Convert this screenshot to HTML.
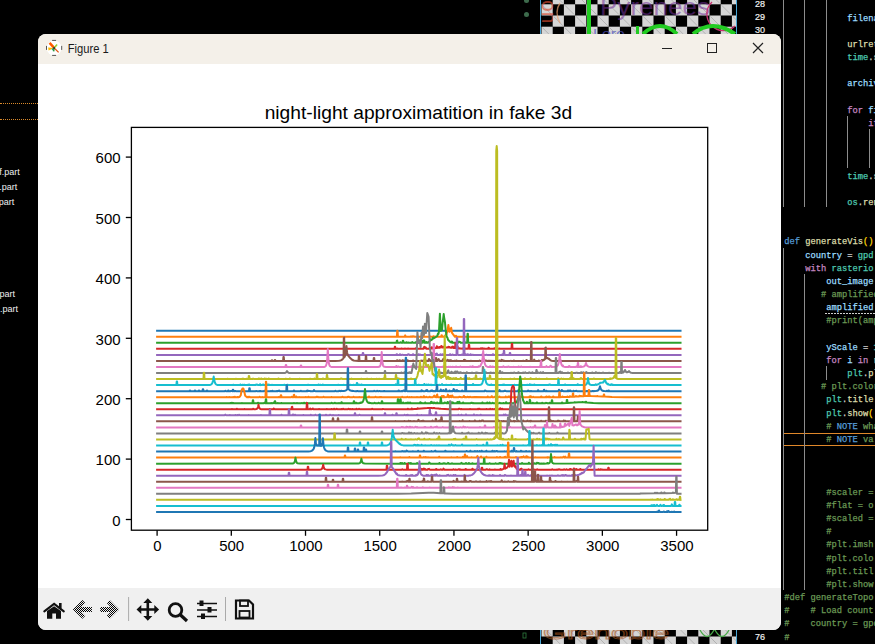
<!DOCTYPE html>
<html><head><meta charset="utf-8">
<style>
html,body{margin:0;padding:0;}
body{width:875px;height:644px;overflow:hidden;position:relative;background:#000;font-family:"Liberation Sans",sans-serif;}
.abs{position:absolute;}
.lt{position:absolute;color:#e8e8e8;font-size:9.5px;line-height:12px;white-space:nowrap;}
.cl{position:absolute;font-family:"Liberation Mono",monospace;font-size:8.75px;line-height:13px;white-space:pre;-webkit-text-stroke:0.25px currentColor;}
.ln{position:absolute;color:#f0f0f0;font-size:9px;line-height:10px;left:753px;width:12px;text-align:right;-webkit-text-stroke:0.2px currentColor;}
#win{position:absolute;left:38px;top:34px;width:743px;height:596px;border-radius:8px;overflow:hidden;background:#fff;}
#tb{position:absolute;left:0;top:0;width:743px;height:30px;background:#f4f0e9;}
#tool{position:absolute;left:0;top:554px;width:743px;height:42px;background:#f0f0f0;}
svg text{font-family:"Liberation Sans",sans-serif;}
#ax text{font-size:14px;fill:#000;}
</style></head><body>
<!-- left panel -->
<div class="abs" style="left:0;top:103px;width:38px;height:0;border-top:1px dotted #d9892a"></div>
<div class="abs" style="left:0;top:119px;width:38px;height:0;border-top:1px dotted #d9892a"></div>
<svg class="abs" style="left:0;top:0" width="60" height="330">
 <g style="font-size:9px;fill:#f0f0f0" text-anchor="end">
 <text x="19.8" y="174.6">f.part</text>
 <text x="17.3" y="189.8">.part</text>
 <text x="14.2" y="204.9">part</text>
 <text x="14.9" y="296.7">part</text>
 <text x="18" y="311.5">.part</text>
 </g></svg>
<!-- green dots -->
<div class="abs" style="left:523.5px;top:-2px;width:5px;height:5px;border-radius:50%;background:#3d6b4c"></div>
<div class="abs" style="left:523.5px;top:11.5px;width:5px;height:5px;border-radius:50%;background:#3d6b4c"></div>
<svg style="position:absolute;left:0;top:0" width="875" height="644"><defs><clipPath id="cc0"><rect x="541" y="0" width="195" height="34"/></clipPath></defs><g clip-path="url(#cc0)">
<rect x="541" y="0" width="195" height="34" fill="#000"/>
<rect x="541.5" y="-18.1" width="11.2" height="11.2" fill="#d6d6d6"/>
<line x1="542.5" y1="-17.1" x2="551.7" y2="-7.9" stroke="#9a9a9a" stroke-width="0.6"/>
<rect x="563.9" y="-18.1" width="11.2" height="11.2" fill="#d6d6d6"/>
<line x1="564.9" y1="-17.1" x2="574.1" y2="-7.9" stroke="#9a9a9a" stroke-width="0.6"/>
<rect x="586.3" y="-18.1" width="11.2" height="11.2" fill="#d6d6d6"/>
<line x1="587.3" y1="-17.1" x2="596.5" y2="-7.9" stroke="#9a9a9a" stroke-width="0.6"/>
<rect x="608.7" y="-18.1" width="11.2" height="11.2" fill="#d6d6d6"/>
<line x1="609.7" y1="-17.1" x2="618.9" y2="-7.9" stroke="#9a9a9a" stroke-width="0.6"/>
<rect x="631.1" y="-18.1" width="11.2" height="11.2" fill="#d6d6d6"/>
<line x1="632.1" y1="-17.1" x2="641.3" y2="-7.9" stroke="#9a9a9a" stroke-width="0.6"/>
<rect x="653.5" y="-18.1" width="11.2" height="11.2" fill="#d6d6d6"/>
<line x1="654.5" y1="-17.1" x2="663.7" y2="-7.9" stroke="#9a9a9a" stroke-width="0.6"/>
<rect x="675.9" y="-18.1" width="11.2" height="11.2" fill="#d6d6d6"/>
<line x1="676.9" y1="-17.1" x2="686.1" y2="-7.9" stroke="#9a9a9a" stroke-width="0.6"/>
<rect x="698.3" y="-18.1" width="11.2" height="11.2" fill="#d6d6d6"/>
<line x1="699.3" y1="-17.1" x2="708.5" y2="-7.9" stroke="#9a9a9a" stroke-width="0.6"/>
<rect x="720.7" y="-18.1" width="11.2" height="11.2" fill="#d6d6d6"/>
<line x1="721.7" y1="-17.1" x2="730.9" y2="-7.9" stroke="#9a9a9a" stroke-width="0.6"/>
<rect x="552.7" y="-6.9" width="11.2" height="11.2" fill="#d6d6d6"/>
<line x1="553.7" y1="-5.9" x2="562.9" y2="3.3" stroke="#9a9a9a" stroke-width="0.6"/>
<rect x="575.1" y="-6.9" width="11.2" height="11.2" fill="#d6d6d6"/>
<line x1="576.1" y1="-5.9" x2="585.3" y2="3.3" stroke="#9a9a9a" stroke-width="0.6"/>
<rect x="597.5" y="-6.9" width="11.2" height="11.2" fill="#d6d6d6"/>
<line x1="598.5" y1="-5.9" x2="607.7" y2="3.3" stroke="#9a9a9a" stroke-width="0.6"/>
<rect x="619.9" y="-6.9" width="11.2" height="11.2" fill="#d6d6d6"/>
<line x1="620.9" y1="-5.9" x2="630.1" y2="3.3" stroke="#9a9a9a" stroke-width="0.6"/>
<rect x="642.3" y="-6.9" width="11.2" height="11.2" fill="#d6d6d6"/>
<line x1="643.3" y1="-5.9" x2="652.5" y2="3.3" stroke="#9a9a9a" stroke-width="0.6"/>
<rect x="664.7" y="-6.9" width="11.2" height="11.2" fill="#d6d6d6"/>
<line x1="665.7" y1="-5.9" x2="674.9" y2="3.3" stroke="#9a9a9a" stroke-width="0.6"/>
<rect x="687.1" y="-6.9" width="11.2" height="11.2" fill="#d6d6d6"/>
<line x1="688.1" y1="-5.9" x2="697.3" y2="3.3" stroke="#9a9a9a" stroke-width="0.6"/>
<rect x="709.5" y="-6.9" width="11.2" height="11.2" fill="#d6d6d6"/>
<line x1="710.5" y1="-5.9" x2="719.7" y2="3.3" stroke="#9a9a9a" stroke-width="0.6"/>
<rect x="731.9" y="-6.9" width="11.2" height="11.2" fill="#d6d6d6"/>
<line x1="732.9" y1="-5.9" x2="742.1" y2="3.3" stroke="#9a9a9a" stroke-width="0.6"/>
<rect x="541.5" y="4.3" width="11.2" height="11.2" fill="#d6d6d6"/>
<line x1="542.5" y1="5.3" x2="551.7" y2="14.5" stroke="#9a9a9a" stroke-width="0.6"/>
<rect x="563.9" y="4.3" width="11.2" height="11.2" fill="#d6d6d6"/>
<line x1="564.9" y1="5.3" x2="574.1" y2="14.5" stroke="#9a9a9a" stroke-width="0.6"/>
<rect x="586.3" y="4.3" width="11.2" height="11.2" fill="#d6d6d6"/>
<line x1="587.3" y1="5.3" x2="596.5" y2="14.5" stroke="#9a9a9a" stroke-width="0.6"/>
<rect x="608.7" y="4.3" width="11.2" height="11.2" fill="#d6d6d6"/>
<line x1="609.7" y1="5.3" x2="618.9" y2="14.5" stroke="#9a9a9a" stroke-width="0.6"/>
<rect x="631.1" y="4.3" width="11.2" height="11.2" fill="#d6d6d6"/>
<line x1="632.1" y1="5.3" x2="641.3" y2="14.5" stroke="#9a9a9a" stroke-width="0.6"/>
<rect x="653.5" y="4.3" width="11.2" height="11.2" fill="#d6d6d6"/>
<line x1="654.5" y1="5.3" x2="663.7" y2="14.5" stroke="#9a9a9a" stroke-width="0.6"/>
<rect x="675.9" y="4.3" width="11.2" height="11.2" fill="#d6d6d6"/>
<line x1="676.9" y1="5.3" x2="686.1" y2="14.5" stroke="#9a9a9a" stroke-width="0.6"/>
<rect x="698.3" y="4.3" width="11.2" height="11.2" fill="#d6d6d6"/>
<line x1="699.3" y1="5.3" x2="708.5" y2="14.5" stroke="#9a9a9a" stroke-width="0.6"/>
<rect x="720.7" y="4.3" width="11.2" height="11.2" fill="#d6d6d6"/>
<line x1="721.7" y1="5.3" x2="730.9" y2="14.5" stroke="#9a9a9a" stroke-width="0.6"/>
<rect x="552.7" y="15.5" width="11.2" height="11.2" fill="#d6d6d6"/>
<line x1="553.7" y1="16.5" x2="562.9" y2="25.7" stroke="#9a9a9a" stroke-width="0.6"/>
<rect x="575.1" y="15.5" width="11.2" height="11.2" fill="#d6d6d6"/>
<line x1="576.1" y1="16.5" x2="585.3" y2="25.7" stroke="#9a9a9a" stroke-width="0.6"/>
<rect x="597.5" y="15.5" width="11.2" height="11.2" fill="#d6d6d6"/>
<line x1="598.5" y1="16.5" x2="607.7" y2="25.7" stroke="#9a9a9a" stroke-width="0.6"/>
<rect x="619.9" y="15.5" width="11.2" height="11.2" fill="#d6d6d6"/>
<line x1="620.9" y1="16.5" x2="630.1" y2="25.7" stroke="#9a9a9a" stroke-width="0.6"/>
<rect x="642.3" y="15.5" width="11.2" height="11.2" fill="#d6d6d6"/>
<line x1="643.3" y1="16.5" x2="652.5" y2="25.7" stroke="#9a9a9a" stroke-width="0.6"/>
<rect x="664.7" y="15.5" width="11.2" height="11.2" fill="#d6d6d6"/>
<line x1="665.7" y1="16.5" x2="674.9" y2="25.7" stroke="#9a9a9a" stroke-width="0.6"/>
<rect x="687.1" y="15.5" width="11.2" height="11.2" fill="#d6d6d6"/>
<line x1="688.1" y1="16.5" x2="697.3" y2="25.7" stroke="#9a9a9a" stroke-width="0.6"/>
<rect x="709.5" y="15.5" width="11.2" height="11.2" fill="#d6d6d6"/>
<line x1="710.5" y1="16.5" x2="719.7" y2="25.7" stroke="#9a9a9a" stroke-width="0.6"/>
<rect x="731.9" y="15.5" width="11.2" height="11.2" fill="#d6d6d6"/>
<line x1="732.9" y1="16.5" x2="742.1" y2="25.7" stroke="#9a9a9a" stroke-width="0.6"/>
<rect x="541.5" y="26.7" width="11.2" height="11.2" fill="#d6d6d6"/>
<line x1="542.5" y1="27.7" x2="551.7" y2="36.9" stroke="#9a9a9a" stroke-width="0.6"/>
<rect x="563.9" y="26.7" width="11.2" height="11.2" fill="#d6d6d6"/>
<line x1="564.9" y1="27.7" x2="574.1" y2="36.9" stroke="#9a9a9a" stroke-width="0.6"/>
<rect x="586.3" y="26.7" width="11.2" height="11.2" fill="#d6d6d6"/>
<line x1="587.3" y1="27.7" x2="596.5" y2="36.9" stroke="#9a9a9a" stroke-width="0.6"/>
<rect x="608.7" y="26.7" width="11.2" height="11.2" fill="#d6d6d6"/>
<line x1="609.7" y1="27.7" x2="618.9" y2="36.9" stroke="#9a9a9a" stroke-width="0.6"/>
<rect x="631.1" y="26.7" width="11.2" height="11.2" fill="#d6d6d6"/>
<line x1="632.1" y1="27.7" x2="641.3" y2="36.9" stroke="#9a9a9a" stroke-width="0.6"/>
<rect x="653.5" y="26.7" width="11.2" height="11.2" fill="#d6d6d6"/>
<line x1="654.5" y1="27.7" x2="663.7" y2="36.9" stroke="#9a9a9a" stroke-width="0.6"/>
<rect x="675.9" y="26.7" width="11.2" height="11.2" fill="#d6d6d6"/>
<line x1="676.9" y1="27.7" x2="686.1" y2="36.9" stroke="#9a9a9a" stroke-width="0.6"/>
<rect x="698.3" y="26.7" width="11.2" height="11.2" fill="#d6d6d6"/>
<line x1="699.3" y1="27.7" x2="708.5" y2="36.9" stroke="#9a9a9a" stroke-width="0.6"/>
<rect x="720.7" y="26.7" width="11.2" height="11.2" fill="#d6d6d6"/>
<line x1="721.7" y1="27.7" x2="730.9" y2="36.9" stroke="#9a9a9a" stroke-width="0.6"/>
<rect x="552.7" y="37.9" width="11.2" height="11.2" fill="#d6d6d6"/>
<line x1="553.7" y1="38.9" x2="562.9" y2="48.1" stroke="#9a9a9a" stroke-width="0.6"/>
<rect x="575.1" y="37.9" width="11.2" height="11.2" fill="#d6d6d6"/>
<line x1="576.1" y1="38.9" x2="585.3" y2="48.1" stroke="#9a9a9a" stroke-width="0.6"/>
<rect x="597.5" y="37.9" width="11.2" height="11.2" fill="#d6d6d6"/>
<line x1="598.5" y1="38.9" x2="607.7" y2="48.1" stroke="#9a9a9a" stroke-width="0.6"/>
<rect x="619.9" y="37.9" width="11.2" height="11.2" fill="#d6d6d6"/>
<line x1="620.9" y1="38.9" x2="630.1" y2="48.1" stroke="#9a9a9a" stroke-width="0.6"/>
<rect x="642.3" y="37.9" width="11.2" height="11.2" fill="#d6d6d6"/>
<line x1="643.3" y1="38.9" x2="652.5" y2="48.1" stroke="#9a9a9a" stroke-width="0.6"/>
<rect x="664.7" y="37.9" width="11.2" height="11.2" fill="#d6d6d6"/>
<line x1="665.7" y1="38.9" x2="674.9" y2="48.1" stroke="#9a9a9a" stroke-width="0.6"/>
<rect x="687.1" y="37.9" width="11.2" height="11.2" fill="#d6d6d6"/>
<line x1="688.1" y1="38.9" x2="697.3" y2="48.1" stroke="#9a9a9a" stroke-width="0.6"/>
<rect x="709.5" y="37.9" width="11.2" height="11.2" fill="#d6d6d6"/>
<line x1="710.5" y1="38.9" x2="719.7" y2="48.1" stroke="#9a9a9a" stroke-width="0.6"/>
<rect x="731.9" y="37.9" width="11.2" height="11.2" fill="#d6d6d6"/>
<line x1="732.9" y1="38.9" x2="742.1" y2="48.1" stroke="#9a9a9a" stroke-width="0.6"/>
</g></svg>
<svg style="position:absolute;left:0;top:0" width="875" height="644"><defs><clipPath id="cc630"><rect x="541" y="630" width="195" height="14"/></clipPath></defs><g clip-path="url(#cc630)">
<rect x="541" y="630" width="195" height="14" fill="#000"/>
<rect x="552.7" y="614.1" width="11.2" height="11.2" fill="#d6d6d6"/>
<line x1="553.7" y1="615.1" x2="562.9" y2="624.3" stroke="#9a9a9a" stroke-width="0.6"/>
<rect x="575.1" y="614.1" width="11.2" height="11.2" fill="#d6d6d6"/>
<line x1="576.1" y1="615.1" x2="585.3" y2="624.3" stroke="#9a9a9a" stroke-width="0.6"/>
<rect x="597.5" y="614.1" width="11.2" height="11.2" fill="#d6d6d6"/>
<line x1="598.5" y1="615.1" x2="607.7" y2="624.3" stroke="#9a9a9a" stroke-width="0.6"/>
<rect x="619.9" y="614.1" width="11.2" height="11.2" fill="#d6d6d6"/>
<line x1="620.9" y1="615.1" x2="630.1" y2="624.3" stroke="#9a9a9a" stroke-width="0.6"/>
<rect x="642.3" y="614.1" width="11.2" height="11.2" fill="#d6d6d6"/>
<line x1="643.3" y1="615.1" x2="652.5" y2="624.3" stroke="#9a9a9a" stroke-width="0.6"/>
<rect x="664.7" y="614.1" width="11.2" height="11.2" fill="#d6d6d6"/>
<line x1="665.7" y1="615.1" x2="674.9" y2="624.3" stroke="#9a9a9a" stroke-width="0.6"/>
<rect x="687.1" y="614.1" width="11.2" height="11.2" fill="#d6d6d6"/>
<line x1="688.1" y1="615.1" x2="697.3" y2="624.3" stroke="#9a9a9a" stroke-width="0.6"/>
<rect x="709.5" y="614.1" width="11.2" height="11.2" fill="#d6d6d6"/>
<line x1="710.5" y1="615.1" x2="719.7" y2="624.3" stroke="#9a9a9a" stroke-width="0.6"/>
<rect x="731.9" y="614.1" width="11.2" height="11.2" fill="#d6d6d6"/>
<line x1="732.9" y1="615.1" x2="742.1" y2="624.3" stroke="#9a9a9a" stroke-width="0.6"/>
<rect x="541.5" y="625.3" width="11.2" height="11.2" fill="#d6d6d6"/>
<line x1="542.5" y1="626.3" x2="551.7" y2="635.5" stroke="#9a9a9a" stroke-width="0.6"/>
<rect x="563.9" y="625.3" width="11.2" height="11.2" fill="#d6d6d6"/>
<line x1="564.9" y1="626.3" x2="574.1" y2="635.5" stroke="#9a9a9a" stroke-width="0.6"/>
<rect x="586.3" y="625.3" width="11.2" height="11.2" fill="#d6d6d6"/>
<line x1="587.3" y1="626.3" x2="596.5" y2="635.5" stroke="#9a9a9a" stroke-width="0.6"/>
<rect x="608.7" y="625.3" width="11.2" height="11.2" fill="#d6d6d6"/>
<line x1="609.7" y1="626.3" x2="618.9" y2="635.5" stroke="#9a9a9a" stroke-width="0.6"/>
<rect x="631.1" y="625.3" width="11.2" height="11.2" fill="#d6d6d6"/>
<line x1="632.1" y1="626.3" x2="641.3" y2="635.5" stroke="#9a9a9a" stroke-width="0.6"/>
<rect x="653.5" y="625.3" width="11.2" height="11.2" fill="#d6d6d6"/>
<line x1="654.5" y1="626.3" x2="663.7" y2="635.5" stroke="#9a9a9a" stroke-width="0.6"/>
<rect x="675.9" y="625.3" width="11.2" height="11.2" fill="#d6d6d6"/>
<line x1="676.9" y1="626.3" x2="686.1" y2="635.5" stroke="#9a9a9a" stroke-width="0.6"/>
<rect x="698.3" y="625.3" width="11.2" height="11.2" fill="#d6d6d6"/>
<line x1="699.3" y1="626.3" x2="708.5" y2="635.5" stroke="#9a9a9a" stroke-width="0.6"/>
<rect x="720.7" y="625.3" width="11.2" height="11.2" fill="#d6d6d6"/>
<line x1="721.7" y1="626.3" x2="730.9" y2="635.5" stroke="#9a9a9a" stroke-width="0.6"/>
<rect x="552.7" y="636.5" width="11.2" height="11.2" fill="#d6d6d6"/>
<line x1="553.7" y1="637.5" x2="562.9" y2="646.7" stroke="#9a9a9a" stroke-width="0.6"/>
<rect x="575.1" y="636.5" width="11.2" height="11.2" fill="#d6d6d6"/>
<line x1="576.1" y1="637.5" x2="585.3" y2="646.7" stroke="#9a9a9a" stroke-width="0.6"/>
<rect x="597.5" y="636.5" width="11.2" height="11.2" fill="#d6d6d6"/>
<line x1="598.5" y1="637.5" x2="607.7" y2="646.7" stroke="#9a9a9a" stroke-width="0.6"/>
<rect x="619.9" y="636.5" width="11.2" height="11.2" fill="#d6d6d6"/>
<line x1="620.9" y1="637.5" x2="630.1" y2="646.7" stroke="#9a9a9a" stroke-width="0.6"/>
<rect x="642.3" y="636.5" width="11.2" height="11.2" fill="#d6d6d6"/>
<line x1="643.3" y1="637.5" x2="652.5" y2="646.7" stroke="#9a9a9a" stroke-width="0.6"/>
<rect x="664.7" y="636.5" width="11.2" height="11.2" fill="#d6d6d6"/>
<line x1="665.7" y1="637.5" x2="674.9" y2="646.7" stroke="#9a9a9a" stroke-width="0.6"/>
<rect x="687.1" y="636.5" width="11.2" height="11.2" fill="#d6d6d6"/>
<line x1="688.1" y1="637.5" x2="697.3" y2="646.7" stroke="#9a9a9a" stroke-width="0.6"/>
<rect x="709.5" y="636.5" width="11.2" height="11.2" fill="#d6d6d6"/>
<line x1="710.5" y1="637.5" x2="719.7" y2="646.7" stroke="#9a9a9a" stroke-width="0.6"/>
<rect x="731.9" y="636.5" width="11.2" height="11.2" fill="#d6d6d6"/>
<line x1="732.9" y1="637.5" x2="742.1" y2="646.7" stroke="#9a9a9a" stroke-width="0.6"/>
<rect x="541.5" y="647.7" width="11.2" height="11.2" fill="#d6d6d6"/>
<line x1="542.5" y1="648.7" x2="551.7" y2="657.9" stroke="#9a9a9a" stroke-width="0.6"/>
<rect x="563.9" y="647.7" width="11.2" height="11.2" fill="#d6d6d6"/>
<line x1="564.9" y1="648.7" x2="574.1" y2="657.9" stroke="#9a9a9a" stroke-width="0.6"/>
<rect x="586.3" y="647.7" width="11.2" height="11.2" fill="#d6d6d6"/>
<line x1="587.3" y1="648.7" x2="596.5" y2="657.9" stroke="#9a9a9a" stroke-width="0.6"/>
<rect x="608.7" y="647.7" width="11.2" height="11.2" fill="#d6d6d6"/>
<line x1="609.7" y1="648.7" x2="618.9" y2="657.9" stroke="#9a9a9a" stroke-width="0.6"/>
<rect x="631.1" y="647.7" width="11.2" height="11.2" fill="#d6d6d6"/>
<line x1="632.1" y1="648.7" x2="641.3" y2="657.9" stroke="#9a9a9a" stroke-width="0.6"/>
<rect x="653.5" y="647.7" width="11.2" height="11.2" fill="#d6d6d6"/>
<line x1="654.5" y1="648.7" x2="663.7" y2="657.9" stroke="#9a9a9a" stroke-width="0.6"/>
<rect x="675.9" y="647.7" width="11.2" height="11.2" fill="#d6d6d6"/>
<line x1="676.9" y1="648.7" x2="686.1" y2="657.9" stroke="#9a9a9a" stroke-width="0.6"/>
<rect x="698.3" y="647.7" width="11.2" height="11.2" fill="#d6d6d6"/>
<line x1="699.3" y1="648.7" x2="708.5" y2="657.9" stroke="#9a9a9a" stroke-width="0.6"/>
<rect x="720.7" y="647.7" width="11.2" height="11.2" fill="#d6d6d6"/>
<line x1="721.7" y1="648.7" x2="730.9" y2="657.9" stroke="#9a9a9a" stroke-width="0.6"/>
</g></svg>
<svg class="abs" style="left:0;top:0" width="875" height="644">
 <line x1="540.5" y1="0" x2="540.5" y2="34" stroke="#4aa8d8" stroke-width="1"/>
 <line x1="736.5" y1="0" x2="736.5" y2="34" stroke="#4aa8d8" stroke-width="1"/>
 <line x1="540.5" y1="630" x2="540.5" y2="644" stroke="#4aa8d8" stroke-width="1"/>
 <line x1="736.5" y1="630" x2="736.5" y2="644" stroke="#4aa8d8" stroke-width="1"/>
 <!-- overlays on checker -->
 <rect x="587" y="0" width="4" height="34" fill="#22cc22"/>
 <text x="0" y="0" transform="translate(542 0) rotate(90)" style="font-size:21px;fill:#d84a30;opacity:0.65">on</text>
 <path d="M560 3 q-6 9 0 20" fill="none" stroke="#e8a070" stroke-width="1.5" opacity="0.7"/>
 <text x="600" y="15" style="font-size:24px;fill:#74309a;opacity:0.55" textLength="110" lengthAdjust="spacingAndGlyphs">Pyrenees</text>
 <path d="M712 2 A14 14 0 0 0 735 26" fill="none" stroke="#c83070" stroke-width="1.3"/>
 <path d="M643 34 Q660 18 677 34" fill="none" stroke="#22cc22" stroke-width="4"/>
 <path d="M693 34 Q712 18 735 34" fill="none" stroke="#22cc22" stroke-width="4"/>
 <text x="593" y="38" style="font-size:13px;fill:#5050c0;opacity:0.7" textLength="32" lengthAdjust="spacingAndGlyphs">Lore</text>
 <rect x="636" y="26" width="3" height="8" fill="#22cc22"/>
 <text x="543" y="639" style="font-size:19px;fill:none;stroke:#a8561e;stroke-width:1;opacity:0.6" textLength="126" lengthAdjust="spacingAndGlyphs">Grenoble</text>
 <path d="M700 630 q7 13 14 0 M715 630 q7 13 14 0" fill="none" stroke="#48a848" stroke-width="1.3"/>
 <rect x="523" y="633" width="3" height="5" fill="none" stroke="#2e7a3e" stroke-width="0.8"/>
 <!-- orange box -->
 <rect x="783.5" y="433.5" width="100" height="12" fill="none" stroke="#e0882a" stroke-width="1"/>
 <line x1="825" y1="313.5" x2="875" y2="313.5" stroke="#d0d0d0" stroke-width="1" stroke-dasharray="2 1"/>
</svg>
<div class="ln" style="top:-1.2px">28</div>
<div class="ln" style="top:11.7px">29</div>
<div class="ln" style="top:24.9px">30</div>
<div class="ln" style="top:632px">76</div>
<div class="abs" style="left:783px;top:0;width:1px;height:207px;background:#5f5f5f"></div>
<div style="position:absolute;left:783.0px;top:0px;width:1px;height:207px;background:#8c8c8c"></div>
<div style="position:absolute;left:804.1px;top:0px;width:1px;height:207px;background:#8c8c8c"></div>
<div style="position:absolute;left:825.8px;top:0px;width:1px;height:207px;background:#8c8c8c"></div>
<div style="position:absolute;left:846.8px;top:116px;width:1px;height:52px;background:#8c8c8c"></div>
<div style="position:absolute;left:868.5px;top:129px;width:1px;height:39px;background:#8c8c8c"></div>
<div style="position:absolute;left:783.0px;top:248px;width:1px;height:342px;background:#8c8c8c"></div>
<div style="position:absolute;left:804.1px;top:274px;width:1px;height:316px;background:#8c8c8c"></div>
<div style="position:absolute;left:825.8px;top:366px;width:1px;height:14px;background:#8c8c8c"></div>
<div class="cl" style="left:847.3px;top:12.5px"><span style="color:#9cdcfe">filename</span></div>
<div class="cl" style="left:847.3px;top:38.8px"><span style="color:#dcdcaa">urlretrieve</span></div>
<div class="cl" style="left:847.3px;top:52.0px"><span style="color:#4ec9b0">time</span><span style="color:#d4d4d4">.</span><span style="color:#dcdcaa">s</span></div>
<div class="cl" style="left:847.3px;top:78.3px"><span style="color:#9cdcfe">archive</span></div>
<div class="cl" style="left:847.3px;top:104.7px"><span style="color:#c586c0">for</span><span style="color:#9cdcfe">&nbsp;fi</span></div>
<div class="cl" style="left:868.3px;top:117.9px"><span style="color:#c586c0">if</span></div>
<div class="cl" style="left:847.3px;top:170.5px"><span style="color:#4ec9b0">time</span><span style="color:#d4d4d4">.</span><span style="color:#dcdcaa">s</span></div>
<div class="cl" style="left:847.3px;top:196.9px"><span style="color:#4ec9b0">os</span><span style="color:#d4d4d4">.</span><span style="color:#dcdcaa">rename</span></div>
<div class="cl" style="left:784.3px;top:236.4px"><span style="color:#569cd6">def</span><span style="color:#d4d4d4">&nbsp;</span><span style="color:#dcdcaa">generateVis</span><span style="color:#ffd700">()</span></div>
<div class="cl" style="left:805.3px;top:249.6px"><span style="color:#9cdcfe">country</span><span style="color:#d4d4d4">&nbsp;=&nbsp;</span><span style="color:#4ec9b0">gpd</span><span style="color:#d4d4d4">.</span></div>
<div class="cl" style="left:805.3px;top:262.7px"><span style="color:#c586c0">with</span><span style="color:#d4d4d4">&nbsp;</span><span style="color:#4ec9b0">rasterio</span><span style="color:#d4d4d4">.</span></div>
<div class="cl" style="left:826.3px;top:275.9px"><span style="color:#9cdcfe">out_image</span></div>
<div class="cl" style="left:821.0px;top:289.1px"><span style="color:#6a9955">#&nbsp;amplified</span></div>
<div class="cl" style="left:826.3px;top:302.2px"><span style="color:#9cdcfe">amplified</span></div>
<div class="cl" style="left:826.3px;top:315.4px"><span style="color:#6a9955">#print(amp</span></div>
<div class="cl" style="left:826.3px;top:341.8px"><span style="color:#9cdcfe">yScale</span><span style="color:#d4d4d4">&nbsp;=&nbsp;</span><span style="color:#4ec9b0">1</span></div>
<div class="cl" style="left:826.3px;top:354.9px"><span style="color:#c586c0">for</span><span style="color:#9cdcfe">&nbsp;i&nbsp;</span><span style="color:#c586c0">in</span><span style="color:#dcdcaa">&nbsp;r</span></div>
<div class="cl" style="left:847.3px;top:368.1px"><span style="color:#4ec9b0">plt</span><span style="color:#d4d4d4">.</span><span style="color:#dcdcaa">pl</span></div>
<div class="cl" style="left:821.0px;top:381.3px"><span style="color:#6a9955">#&nbsp;plt.color</span></div>
<div class="cl" style="left:826.3px;top:394.4px"><span style="color:#4ec9b0">plt</span><span style="color:#d4d4d4">.</span><span style="color:#dcdcaa">title</span></div>
<div class="cl" style="left:826.3px;top:407.6px"><span style="color:#4ec9b0">plt</span><span style="color:#d4d4d4">.</span><span style="color:#dcdcaa">show</span><span style="color:#ffd700">(</span></div>
<div class="cl" style="left:826.3px;top:420.8px"><span style="color:#6a9955">#&nbsp;</span><span style="color:#569cd6">NOTE</span><span style="color:#6a9955">&nbsp;wha</span></div>
<div class="cl" style="left:826.3px;top:433.9px"><span style="color:#6a9955">#&nbsp;</span><span style="color:#569cd6">NOTE</span><span style="color:#6a9955">&nbsp;va</span></div>
<div class="cl" style="left:826.3px;top:486.6px"><span style="color:#6a9955">#scaler&nbsp;=</span></div>
<div class="cl" style="left:826.3px;top:499.8px"><span style="color:#6a9955">#flat&nbsp;=&nbsp;o</span></div>
<div class="cl" style="left:826.3px;top:513.0px"><span style="color:#6a9955">#scaled&nbsp;=</span></div>
<div class="cl" style="left:826.3px;top:526.1px"><span style="color:#6a9955">#</span></div>
<div class="cl" style="left:826.3px;top:539.3px"><span style="color:#6a9955">#plt.imsh</span></div>
<div class="cl" style="left:826.3px;top:552.5px"><span style="color:#6a9955">#plt.colo</span></div>
<div class="cl" style="left:826.3px;top:565.6px"><span style="color:#6a9955">#plt.titl</span></div>
<div class="cl" style="left:826.3px;top:578.8px"><span style="color:#6a9955">#plt.show</span></div>
<div class="cl" style="left:784.3px;top:592.0px"><span style="color:#6a9955">#def&nbsp;generateTopo</span></div>
<div class="cl" style="left:784.3px;top:605.1px"><span style="color:#6a9955">#&nbsp;&nbsp;&nbsp;&nbsp;#&nbsp;Load&nbsp;count</span></div>
<div class="cl" style="left:784.3px;top:618.3px"><span style="color:#6a9955">#&nbsp;&nbsp;&nbsp;&nbsp;country&nbsp;=&nbsp;gpd</span></div>
<div class="cl" style="left:784.3px;top:631.5px"><span style="color:#6a9955">#</span></div>
<!-- window -->
<div id="win">
 <div id="tb">
  <svg class="abs" style="left:0;top:0" width="743" height="30">
   <g transform="translate(16.1 13.9)">
    <circle r="7.4" fill="#fff"/>
    <path d="M-2 -7.5 h4 M-2 7.5 h4 M-7.6 -2 v4 M7.6 -2 v4" stroke="#555" stroke-width="1"/>
    <path d="M0 0 L-4.5 -5" stroke="#ff5a00" stroke-width="2.5"/>
    <path d="M0 0 L-6 -0.5 L-5.5 2.5 Z" fill="#ffbb00"/>
    <path d="M0 0 L3 -3.5" stroke="#9acd32" stroke-width="1.6"/>
    <path d="M0 0 L-2 2" stroke="#20a0a0" stroke-width="1.5"/>
    <path d="M0 0 L-0.5 3.5" stroke="#2a9a3a" stroke-width="1.5"/>
    <path d="M0 0 L4.5 4.5" stroke="#e05010" stroke-width="1.3"/>
    <circle cx="0" cy="0" r="1" fill="#333"/>
   </g>
   <text x="29.7" y="18.8" style="font-size:12px;fill:#1a1a1a" textLength="41" lengthAdjust="spacingAndGlyphs">Figure 1</text>
   <path d="M624 14.5 h10" stroke="#222" stroke-width="1"/>
   <rect x="669.5" y="9.5" width="9" height="9" fill="none" stroke="#222" stroke-width="1"/>
   <path d="M715 9 L725 19 M725 9 L715 19" stroke="#222" stroke-width="1.2"/>
  </svg>
 </div>
 <div id="tool">
  <svg class="abs" style="left:0;top:0" width="743" height="42">
   <!-- home -->
   <defs><pattern id="dith" width="2" height="2" patternUnits="userSpaceOnUse"><rect width="1" height="1" fill="#000"/><rect x="1" y="1" width="1" height="1" fill="#000"/></pattern></defs>
   <path d="M6.3 23.3 L16.1 15.9 L25.8 23.3" fill="none" stroke="#111" stroke-width="2.1" stroke-linecap="round"/>
   <rect x="21" y="15" width="2.6" height="5.5" fill="#111"/>
   <path d="M9 23 L16.1 18.3 L23 23 V30.8 H18 V25.5 H14.3 V30.8 H9 Z" fill="#111"/>
   <g fill="url(#dith)">
    <path d="M34.9 21.4 L44.4 12.1 L47.3 15.0 L43.4 18.9 L53.9 18.9 L53.9 23.9 L43.4 23.9 L47.3 27.8 L44.4 30.7 Z"/>
    <path d="M81.2 21.4 L71.7 12.1 L68.8 15.0 L72.7 18.9 L62.2 18.9 L62.2 23.9 L72.7 23.9 L68.8 27.8 L71.7 30.7 Z"/>
   </g>
<line x1="90.6" y1="9" x2="90.6" y2="33" stroke="#aaa" stroke-width="1"/>
   <!-- move -->
   <g transform="translate(109.8 21.5)" fill="#111" stroke="#111">
    <path d="M-9 0 H9 M0 -9 V9" stroke-width="2.6"/>
    <path d="M-11.3 0 L-6.5 -4.5 V4.5 Z M11.3 0 L6.5 -4.5 V4.5 Z M0 -11.3 L-4.5 -6.5 H4.5 Z M0 11.3 L-4.5 6.5 H4.5 Z" stroke="none"/>
   </g>
   <!-- zoom -->
   <circle cx="137.5" cy="22" r="6.3" fill="none" stroke="#111" stroke-width="2.8"/>
   <path d="M142 26.5 L149 33" stroke="#111" stroke-width="3.2"/>
   <!-- sliders -->
   <path d="M159 15.5 H179 M159 22 H179 M159 28.5 H179" stroke="#111" stroke-width="1.3"/>
   <rect x="161.5" y="12.5" width="4" height="5.5" fill="#111"/>
   <rect x="169.5" y="19" width="4" height="5.5" fill="#111"/>
   <rect x="163" y="25.5" width="4" height="5.5" fill="#111"/>
   <line x1="187.5" y1="9" x2="187.5" y2="33" stroke="#aaa" stroke-width="1"/>
   <!-- save -->
   <path d="M198 12.5 H211 L215 16.5 V30.5 H198 Z" fill="none" stroke="#111" stroke-width="2.2"/>
   <rect x="202" y="12.5" width="8" height="5.5" fill="none" stroke="#111" stroke-width="1.8"/>
   <rect x="201.5" y="23" width="10" height="6.5" fill="none" stroke="#111" stroke-width="1.8"/>
  </svg>
 </div>
</div>
<svg id="ax" class="abs" style="left:0;top:0" width="875" height="644">
<g fill="none" stroke-width="2" stroke-linejoin="round" stroke-linecap="square">
<path d="M157.10 330.75 680.53 330.75" stroke="#1f77b4"/>
<path d="M157.10 336.79 396.90 336.79 397.20 330.79 397.60 330.79 397.90 336.79 404.57 336.79 405.19 335.38 405.89 336.79 410.03 336.79 410.33 336.46 410.73 336.47 411.03 336.79 411.59 336.79 411.93 336.27 412.29 336.27 412.59 336.79 413.30 336.79 413.60 336.33 414.00 336.33 414.30 336.79 420.87 336.79 421.17 336.22 421.28 336.22 421.57 336.22 421.87 336.79 429.38 336.79 429.68 336.22 429.78 336.22 430.08 336.22 430.38 336.79 432.94 336.79 433.24 336.20 433.64 336.19 433.94 336.39 434.33 336.39 434.63 336.79 441.14 336.79 441.51 335.35 441.84 335.35 442.21 336.79 444.58 336.79 445.04 336.41 445.34 335.39 445.58 335.33 445.74 335.11 446.04 335.36 446.72 333.00 447.28 331.68 448.40 325.04 449.50 331.79 450.50 330.79 451.20 327.79 452.00 332.79 455.00 336.79 455.43 336.79 455.79 335.84 456.13 335.84 456.45 336.79 680.53 336.79" stroke="#ff7f0e"/>
<path d="M157.10 342.83 396.50 342.83 396.80 340.83 396.95 340.83 397.20 340.55 397.50 342.49 397.65 342.49 397.95 342.77 399.99 342.83 400.29 342.33 400.69 342.33 400.99 342.83 402.50 342.83 402.80 340.83 403.20 340.83 403.50 342.31 403.93 342.26 404.23 342.83 405.98 342.81 406.28 342.20 406.68 342.20 406.98 342.83 407.81 342.83 408.11 342.38 408.50 342.38 408.81 342.83 411.57 342.83 411.87 342.22 412.16 342.22 412.27 342.09 412.57 342.46 412.86 342.46 413.16 342.83 415.68 342.83 415.98 342.08 416.38 342.08 416.68 342.83 416.78 342.83 417.08 342.11 417.20 342.11 417.48 342.11 417.78 342.83 419.69 342.83 419.99 340.48 420.24 340.40 420.41 339.68 420.71 341.45 420.94 341.45 421.24 342.83 422.25 342.83 422.59 342.12 422.89 340.79 423.29 341.20 423.59 342.41 423.94 340.28 424.29 340.36 424.59 342.52 424.73 342.83 425.96 342.83 426.26 342.08 426.38 342.08 426.66 342.08 426.96 342.83 427.89 342.83 428.59 342.00 428.89 341.94 429.99 340.84 430.39 339.50 430.69 339.30 431.09 340.10 432.56 339.12 432.86 337.84 433.26 337.56 433.56 338.37 435.98 336.84 436.68 336.20 436.98 336.18 437.42 335.89 437.74 334.19 438.11 333.46 438.42 333.95 438.52 333.80 439.00 330.75 439.90 313.63 440.80 330.83 442.00 329.83 442.53 323.93 443.70 314.09 444.03 316.83 444.96 322.28 445.66 329.69 446.50 335.83 446.98 337.11 447.28 337.27 447.68 338.34 448.00 339.83 450.00 341.83 451.37 342.51 451.67 341.40 452.07 341.57 452.37 342.83 457.31 342.83 457.61 342.44 458.01 342.44 458.15 342.62 458.45 341.77 458.87 341.85 459.17 341.70 459.57 341.70 459.87 342.12 460.27 342.02 460.57 342.73 460.78 342.83 464.42 342.83 464.72 342.17 465.12 342.17 465.42 342.83 467.20 342.83 467.50 333.83 467.90 333.83 468.20 342.83 680.53 342.83" stroke="#2ca02c"/>
<path d="M157.10 348.87 394.50 348.87 394.80 346.87 395.20 346.87 395.50 348.87 396.79 348.87 397.09 348.58 397.49 348.58 397.79 348.87 401.06 348.87 401.36 348.51 401.76 348.51 402.06 348.87 404.43 348.87 404.79 348.49 405.13 348.49 405.43 348.87 407.60 348.87 407.90 348.60 408.30 348.60 408.60 348.87 415.33 348.87 415.65 348.29 416.01 348.29 416.35 348.87 421.62 348.85 423.64 348.80 423.94 347.26 424.35 346.79 425.07 347.56 425.29 348.16 425.59 347.44 425.87 347.44 426.29 348.77 429.36 348.64 429.66 347.91 430.06 347.89 430.36 348.59 430.99 348.55 431.42 348.30 431.72 347.16 432.12 347.32 432.42 348.43 436.11 348.06 436.41 347.27 436.67 346.97 436.81 346.32 436.97 346.28 437.37 346.86 437.67 347.88 437.95 347.85 438.28 347.41 438.65 347.37 438.95 347.74 439.07 347.73 439.37 347.01 439.77 346.97 440.07 347.61 440.35 347.26 440.78 347.26 440.96 347.08 441.26 345.90 441.48 345.88 441.96 347.47 442.80 347.43 443.10 346.80 443.50 346.78 443.80 347.39 447.48 347.44 447.97 347.36 448.27 346.82 448.67 346.93 448.94 347.47 449.24 346.96 449.63 346.99 449.94 347.63 450.81 347.72 451.11 347.53 451.51 347.57 451.80 347.81 452.10 346.79 452.50 346.84 452.54 347.00 452.80 346.93 452.84 346.76 453.24 346.81 453.54 348.02 454.00 348.07 454.51 347.78 455.10 348.01 455.40 343.08 455.80 343.27 456.10 348.28 456.39 347.94 456.79 347.98 456.89 348.12 457.26 346.36 457.59 346.39 457.96 348.47 459.21 348.56 459.53 348.25 459.91 348.27 460.21 348.62 461.31 348.68 461.61 348.53 462.01 348.55 462.31 348.73 462.70 348.74 463.00 348.24 463.24 348.25 463.40 348.03 463.70 348.36 463.94 348.37 464.24 348.79 465.34 348.76 465.64 348.39 466.04 348.45 466.34 348.83 467.67 348.84 468.19 348.10 468.37 348.10 468.50 348.27 468.80 344.75 469.20 344.85 469.50 348.86 480.52 348.87 480.82 348.30 481.12 348.30 481.23 348.30 481.52 348.87 481.83 348.87 482.14 348.31 482.53 348.31 482.83 348.87 483.51 348.87 483.81 348.41 484.18 348.41 484.51 348.87 488.07 348.87 488.54 347.70 488.77 347.70 489.24 348.87 491.53 348.87 491.83 348.68 492.23 348.68 492.53 348.87 493.86 348.87 494.21 348.23 494.56 348.23 494.86 348.87 496.04 348.87 496.34 347.72 496.59 347.66 496.76 347.71 497.06 348.87 498.89 348.87 499.19 348.59 499.59 348.59 499.89 348.87 511.50 348.87 511.80 343.87 512.20 343.87 512.50 348.87 680.53 348.87" stroke="#d62728"/>
<path d="M157.10 354.91 362.50 354.91 362.80 352.91 363.20 352.91 363.50 354.91 396.32 354.91 396.63 354.13 397.02 354.13 397.32 354.91 399.49 354.91 399.79 354.36 400.19 354.36 400.49 354.91 401.86 354.91 402.16 354.76 402.56 354.76 402.86 354.91 407.77 354.91 408.07 354.23 408.47 354.23 408.77 354.54 408.85 354.39 409.25 354.39 409.55 354.91 412.57 354.91 412.87 354.34 413.27 354.34 413.57 354.91 418.09 354.91 418.39 354.23 418.79 354.23 419.09 354.91 419.63 354.91 419.93 354.51 420.33 354.51 420.63 354.91 423.88 354.91 424.27 354.67 424.51 354.67 424.97 354.91 430.00 354.91 430.30 354.65 430.70 354.65 431.00 354.91 431.20 354.91 431.63 354.82 432.11 353.32 432.33 353.35 432.81 354.91 434.49 354.91 434.84 354.01 435.24 354.04 435.54 354.91 436.19 354.91 436.69 353.51 436.88 353.51 437.39 354.91 439.99 354.91 440.29 354.26 440.69 354.26 440.99 354.91 442.24 354.91 442.54 354.34 442.94 354.34 443.24 354.91 444.18 354.91 444.65 354.72 444.95 354.39 445.35 354.53 445.65 354.91 449.65 354.89 449.95 354.17 450.35 354.18 450.65 354.91 452.18 354.91 452.48 354.47 452.88 354.47 453.18 354.91 455.30 354.91 456.00 354.79 456.50 354.91 456.80 337.91 457.20 337.91 457.50 354.63 457.93 354.60 458.23 354.91 461.49 354.91 461.79 354.52 462.19 354.52 462.49 354.91 463.50 354.91 463.80 318.91 464.20 318.91 464.50 354.91 465.04 354.91 465.34 354.17 465.74 354.18 466.04 354.91 467.27 354.91 467.57 354.27 467.69 354.27 467.97 354.27 468.27 354.91 470.03 354.91 470.41 354.14 470.73 354.14 471.03 354.91 472.19 354.91 472.49 354.71 472.79 354.71 473.19 354.91 482.11 354.91 482.41 354.32 482.63 354.32 482.81 354.14 483.11 354.62 483.33 354.62 483.63 354.91 485.71 354.88 486.40 354.76 487.10 354.91 492.54 354.91 492.84 354.24 493.19 354.24 493.54 354.91 494.83 354.91 495.13 354.64 495.53 354.64 495.83 354.91 502.03 354.91 502.37 354.29 502.73 354.29 503.03 354.91 503.50 354.91 503.80 350.91 504.20 350.66 504.50 354.62 504.65 354.62 504.95 354.91 509.50 354.91 509.80 352.91 510.20 352.91 510.50 354.91 680.53 354.91" stroke="#9467bd"/>
<path d="M157.10 360.95 271.50 360.95 271.80 360.15 272.20 360.15 272.50 360.95 274.50 360.95 274.80 359.95 275.20 359.95 275.50 360.95 283.10 360.95 283.40 356.95 283.80 356.95 284.10 360.95 335.09 360.95 339.00 360.81 340.36 360.52 341.38 360.08 342.40 359.40 343.50 358.35 343.80 338.01 344.20 337.50 344.50 357.06 345.29 355.37 345.80 353.22 346.14 350.66 346.50 346.02 346.82 350.09 347.16 352.63 347.67 354.65 348.18 355.71 350.22 358.12 352.09 359.76 353.62 360.51 355.66 360.87 358.50 360.95 358.80 355.95 359.20 355.95 359.50 360.95 365.50 360.95 365.80 355.95 366.20 355.95 366.50 360.95 373.50 360.95 373.80 357.95 374.20 357.95 374.50 360.95 396.70 360.95 397.00 360.23 397.40 360.23 397.70 360.95 399.27 360.95 399.57 360.25 399.97 360.25 400.27 360.95 402.11 360.95 402.41 360.15 402.81 360.16 403.11 360.95 403.58 360.95 403.88 360.42 404.28 360.42 404.58 360.95 405.81 360.95 406.15 360.49 406.51 360.49 406.81 360.95 407.12 360.95 407.42 360.30 407.82 360.30 408.12 360.95 412.63 360.95 412.93 360.42 413.33 360.42 413.63 360.95 420.46 360.95 421.11 360.49 421.80 360.95 422.30 360.85 423.58 360.95 423.88 360.46 424.10 360.46 424.40 359.95 424.58 360.25 424.80 360.25 425.10 360.95 425.91 360.95 426.21 360.68 426.55 360.68 426.91 360.95 427.11 360.95 427.41 360.64 427.57 360.64 427.81 360.64 428.11 360.95 428.42 360.95 428.88 359.04 429.12 359.04 429.58 359.87 429.86 359.87 430.16 360.95 432.75 360.95 433.05 360.52 433.45 360.52 433.77 360.95 434.07 360.21 434.20 360.21 434.48 360.21 434.77 360.95 435.50 360.95 435.80 357.95 436.20 357.95 436.50 360.95 437.42 360.95 437.72 360.27 437.98 360.27 438.28 359.43 438.49 359.34 438.68 359.04 439.13 360.47 439.49 360.95 440.52 360.95 440.82 360.68 441.22 360.68 441.52 360.95 442.52 360.95 443.15 359.09 443.63 360.24 443.85 359.93 444.17 358.35 444.33 358.35 444.63 359.53 444.87 359.98 445.19 359.98 445.49 360.95 446.10 360.95 446.40 360.47 446.80 360.45 447.10 360.82 447.36 360.82 447.66 359.87 448.06 359.91 448.36 360.95 449.29 360.95 449.59 360.31 449.99 360.31 450.31 360.95 450.61 360.15 451.01 360.15 451.31 360.95 453.99 360.95 454.69 360.85 456.07 360.95 456.37 360.38 456.77 360.38 457.07 360.95 463.63 360.95 463.93 359.90 464.12 359.80 464.33 359.80 464.69 360.95 464.82 360.95 465.14 360.31 465.52 360.31 465.82 360.95 470.49 360.95 470.92 360.80 471.49 360.95 479.13 360.95 479.43 360.52 479.83 360.52 480.13 360.95 485.16 360.95 485.46 360.44 485.71 360.44 485.86 360.23 486.16 360.53 486.41 360.53 486.71 360.95 488.50 360.87 495.80 360.95 496.10 360.57 496.25 360.57 497.20 360.68 497.50 360.83 497.65 360.72 498.05 360.72 498.35 360.95 498.92 360.95 499.22 360.58 499.62 360.58 499.92 360.95 501.09 360.95 501.39 359.96 501.50 359.84 501.79 359.84 502.16 360.90 502.46 360.20 502.86 360.20 503.16 360.95 504.24 360.77 504.63 360.95 510.36 360.95 510.70 360.79 511.06 360.79 511.36 360.95 513.41 360.95 513.71 360.41 514.11 360.41 514.41 360.95 522.65 360.95 522.96 360.64 523.28 360.64 523.65 360.95 525.96 360.95 526.42 359.98 526.62 359.98 526.82 360.13 527.12 360.95 530.80 360.95 531.10 341.95 531.50 341.95 531.80 360.95 533.48 360.95 534.18 359.58 534.88 360.94 538.34 360.95 538.64 360.43 539.04 360.43 539.34 360.95 541.39 360.89 541.69 360.08 542.09 360.02 542.39 360.74 542.66 360.67 542.96 360.56 543.26 359.93 543.66 359.70 543.96 360.00 545.10 359.04 545.40 347.77 545.80 347.44 546.10 358.24 546.91 357.95 547.59 358.08 548.76 358.91 549.06 358.81 549.46 359.16 549.76 359.79 550.48 360.29 551.33 360.66 552.52 360.88 680.53 360.95" stroke="#8c564b"/>
<path d="M157.10 366.99 285.50 366.99 285.80 364.99 286.20 364.99 286.50 366.99 300.50 366.99 300.80 365.49 301.20 365.49 301.50 366.99 323.87 366.92 324.89 366.71 325.57 366.25 326.08 365.45 326.59 363.79 326.93 361.80 327.27 358.55 327.80 348.99 328.29 358.05 328.63 361.49 328.97 363.61 329.31 364.91 329.82 365.99 330.50 366.61 331.35 366.88 334.24 366.99 376.06 366.99 378.10 366.95 379.12 366.79 379.63 366.51 380.14 365.88 380.48 365.03 380.82 363.53 381.33 358.89 381.70 351.99 382.18 360.25 382.69 364.11 383.03 365.36 383.37 366.06 383.88 366.59 384.39 366.82 386.09 366.98 395.92 366.99 396.26 366.06 396.62 366.06 396.97 366.99 398.04 366.99 398.34 366.58 398.74 366.58 399.04 366.99 402.84 366.99 403.14 366.74 403.54 366.71 403.84 366.93 404.38 366.99 410.25 366.99 410.55 366.74 410.91 366.74 411.31 366.99 411.61 366.20 411.76 366.20 412.01 366.20 412.31 366.99 415.78 366.99 416.08 366.38 416.48 366.37 416.78 366.99 425.31 366.99 425.61 366.20 425.70 366.20 426.00 366.20 426.31 366.99 433.30 366.99 433.60 343.99 434.00 343.99 434.30 366.99 442.93 366.99 443.23 366.27 443.63 366.27 443.93 366.99 448.27 366.99 448.57 366.69 448.82 366.69 448.97 366.69 449.27 366.99 449.73 366.99 450.03 366.67 450.43 366.67 450.73 366.99 452.21 366.99 452.56 366.66 452.91 366.66 453.21 366.99 455.62 366.99 455.92 366.47 456.31 366.47 456.62 366.99 459.84 366.99 460.14 366.62 460.54 366.62 460.84 366.99 469.65 366.99 469.95 366.55 470.07 366.55 470.35 366.55 470.65 366.99 472.11 366.99 472.40 366.19 472.81 366.19 473.11 366.99 478.11 366.89 478.40 366.38 478.81 366.32 479.11 366.72 479.25 366.68 479.93 366.38 480.61 365.79 480.91 364.58 481.31 363.78 481.61 363.73 481.80 363.04 482.21 361.07 482.65 357.63 483.20 350.99 483.84 358.52 484.35 361.86 484.86 363.95 485.54 365.45 486.22 366.21 487.07 366.66 488.43 366.90 489.79 366.97 490.09 366.20 490.39 366.16 490.49 366.16 490.79 366.93 491.09 366.98 492.29 366.99 492.68 366.39 492.99 366.39 493.29 366.99 495.07 366.99 495.77 366.88 496.07 366.99 502.84 366.99 503.29 366.31 503.54 366.31 503.99 366.99 506.53 366.99 506.83 366.79 507.23 366.79 507.53 366.99 507.79 366.99 508.09 366.66 508.49 366.59 509.12 366.68 509.42 366.99 513.16 366.99 513.59 366.81 513.86 366.81 514.16 366.99 518.18 366.99 518.48 366.47 518.88 366.47 519.18 366.99 520.73 366.99 521.03 366.56 521.43 366.56 521.73 366.99 524.04 366.99 524.34 366.89 525.04 366.99 529.58 366.99 529.88 366.84 530.28 366.84 530.58 366.99 539.50 366.99 539.80 366.30 540.20 366.30 540.50 366.99 540.80 361.49 541.08 360.95 541.20 360.95 541.50 366.45 541.76 366.99 545.63 366.99 545.93 366.56 546.14 366.56 546.44 366.16 546.63 366.42 546.84 366.42 547.14 366.99 549.48 366.99 550.00 366.78 550.40 365.66 550.70 365.72 551.00 366.31 551.47 366.35 551.77 366.99 555.43 366.83 555.73 366.57 556.13 366.46 556.43 366.54 556.90 366.28 557.90 365.05 558.30 364.09 558.81 362.16 559.15 360.20 559.80 353.99 560.28 358.95 561.36 364.26 561.87 365.35 562.35 365.98 562.65 365.48 563.05 365.72 563.35 366.62 564.59 366.88 568.32 366.99 568.62 366.32 568.96 366.32 569.02 366.15 569.25 366.10 569.32 366.24 569.65 366.24 569.96 366.99 570.88 366.99 571.18 366.88 571.88 366.99 575.78 366.99 576.08 366.61 576.48 366.61 576.78 366.99 577.50 366.99 577.80 362.99 578.20 362.99 578.50 366.99 580.23 366.98 580.57 366.27 580.93 366.26 581.23 366.96 582.53 366.87 583.66 366.60 584.66 365.94 585.33 364.94 586.00 362.99 586.69 364.98 587.54 366.13 588.73 366.73 590.60 366.95 680.53 366.99" stroke="#e377c2"/>
<path d="M157.10 373.03 282.90 373.02 284.60 372.93 285.62 372.67 286.47 372.00 287.00 371.03 287.66 372.15 288.34 372.66 289.36 372.93 291.06 373.02 365.50 373.03 365.80 371.03 366.20 371.03 366.50 373.03 384.50 373.03 384.80 371.03 385.20 371.03 385.50 373.03 400.96 373.03 401.26 372.39 401.39 372.39 401.66 372.39 401.96 373.03 403.96 373.03 404.26 372.32 404.66 372.32 404.96 373.03 408.47 373.03 408.77 372.38 409.17 372.38 409.32 372.70 409.47 372.64 409.62 372.25 410.02 372.25 410.32 373.03 411.50 373.03 413.30 363.58 413.67 364.95 414.50 367.03 415.14 367.56 416.20 369.03 417.40 332.03 418.50 343.03 419.90 341.03 420.60 347.03 421.50 333.03 422.20 338.14 423.00 326.42 424.00 335.03 424.90 323.63 425.22 327.29 426.00 333.03 427.30 313.03 428.60 316.91 429.80 347.03 430.60 353.03 430.70 353.21 431.00 352.50 431.33 353.10 431.40 352.98 431.63 353.54 432.50 363.03 432.93 362.17 433.50 359.96 434.80 369.35 436.00 372.97 436.70 373.03 437.00 372.32 437.40 372.32 437.70 373.03 438.80 373.03 439.10 372.53 439.50 372.53 439.80 373.03 440.32 373.03 440.62 372.39 441.02 372.39 441.32 373.03 443.43 373.03 443.73 372.40 444.13 372.40 444.43 373.03 446.24 373.03 446.54 372.51 446.94 372.51 447.24 373.00 447.49 372.84 447.69 372.44 448.11 370.53 448.28 370.42 448.51 370.96 448.81 372.35 448.98 372.71 449.41 373.03 450.18 372.87 451.05 373.03 451.35 371.78 451.75 371.78 452.05 373.03 453.19 373.03 453.60 372.60 453.89 372.60 454.30 373.03 454.80 373.03 455.11 371.55 455.50 371.55 455.80 373.03 456.14 373.03 456.44 372.78 456.66 372.78 456.96 371.52 457.08 371.51 457.36 371.56 457.66 372.76 457.89 372.29 458.29 372.28 458.59 373.03 459.07 373.03 459.37 372.61 459.70 372.61 460.11 373.03 460.41 372.33 460.81 372.31 461.11 372.87 461.49 372.87 461.79 373.03 463.21 373.03 463.61 372.63 463.91 372.63 464.21 373.03 466.33 373.03 466.63 372.31 467.01 372.31 467.33 373.03 471.44 373.03 471.74 372.65 472.14 372.59 472.44 372.97 472.85 373.03 475.58 373.03 475.88 372.53 476.28 372.53 476.54 372.97 476.84 372.54 477.24 372.54 477.54 373.03 478.17 373.03 478.74 372.86 479.17 373.03 482.50 373.03 482.80 367.03 483.20 367.03 483.50 373.03 485.06 373.03 485.40 372.80 485.71 372.20 486.10 372.43 486.40 373.03 489.91 372.99 490.21 372.54 490.61 372.54 490.91 372.99 491.17 372.70 491.57 372.64 492.07 373.03 493.12 373.03 493.42 372.71 493.82 372.71 494.12 373.03 495.20 373.03 495.50 372.86 495.90 372.86 496.20 373.03 498.47 373.03 498.77 372.80 499.17 372.80 499.50 373.03 499.80 371.03 500.20 371.03 500.50 373.03 501.83 373.03 502.13 372.36 502.53 372.36 502.83 373.03 510.53 373.03 510.83 372.81 511.23 372.81 511.53 373.03 512.51 373.03 512.91 372.82 513.87 373.03 514.17 372.62 514.57 372.62 514.87 373.03 517.74 373.03 518.18 372.34 518.51 372.37 518.81 372.93 518.99 372.78 519.39 372.78 519.69 373.03 522.68 373.03 522.98 372.45 523.38 372.45 523.68 373.03 524.62 373.03 525.12 372.32 525.32 372.32 525.80 373.03 528.55 373.03 528.85 372.44 529.25 372.37 529.55 372.48 529.91 372.42 530.21 372.96 531.90 373.03 532.20 372.32 532.29 372.32 532.60 372.32 532.90 373.03 536.00 373.03 536.37 370.03 536.70 370.03 537.00 373.03 537.71 373.03 538.01 372.58 538.41 372.58 538.71 373.03 540.03 373.03 540.33 372.34 540.73 372.34 541.03 372.69 541.47 372.63 541.77 373.03 542.37 373.03 542.67 372.30 543.07 372.13 543.37 372.84 543.82 373.03 544.51 372.90 545.21 373.03 555.50 373.03 555.80 358.03 556.20 358.03 556.50 373.03 558.34 373.03 558.64 372.45 559.04 372.28 559.34 372.83 559.50 372.86 559.85 372.34 560.14 371.54 560.85 373.03 561.53 372.96 561.84 372.30 562.24 372.36 562.53 373.03 567.47 373.03 567.77 372.42 568.17 372.42 568.47 373.03 575.60 373.03 575.90 372.78 576.60 372.82 577.05 372.65 577.76 373.03 580.69 373.03 580.99 372.27 581.39 372.28 581.69 373.03 581.89 373.03 582.20 372.76 582.60 372.76 582.92 373.03 583.22 372.30 583.62 372.30 583.92 373.03 585.42 373.03 585.73 372.41 586.05 372.41 586.12 372.20 586.35 372.09 586.42 372.25 586.75 372.25 587.05 373.03 591.80 373.03 592.10 372.43 592.50 372.43 592.80 373.03 595.31 373.03 595.61 372.29 595.70 372.29 596.01 372.29 596.31 372.49 596.74 372.44 597.03 373.03 598.43 373.03 598.83 372.66 599.23 372.69 599.53 373.03 602.50 373.03 602.84 372.54 603.20 372.54 603.50 373.01 604.26 373.03 608.59 373.03 608.89 372.72 609.29 372.72 609.59 373.03 616.05 373.03 616.35 372.71 616.75 372.71 617.05 373.03 619.21 373.02 619.51 372.19 619.97 372.06 620.27 372.35 620.58 372.34 620.88 372.95 621.00 372.97 621.30 361.95 621.70 361.92 622.00 372.88 623.16 372.55 623.46 371.70 623.86 371.38 624.16 371.71 625.00 369.99 625.45 370.95 626.28 372.06 626.64 372.26 627.28 372.36 627.58 372.09 628.28 371.94 629.00 370.98 629.53 371.82 630.38 372.51 631.23 372.81 632.59 372.97 680.53 373.03" stroke="#7f7f7f"/>
<path d="M157.10 379.07 203.50 379.07 203.80 372.67 204.20 372.67 204.50 379.07 227.15 379.07 227.48 378.80 227.85 378.80 228.15 379.01 228.71 378.93 229.01 379.07 235.44 379.07 235.81 378.81 236.13 378.81 236.44 379.07 241.92 379.07 242.22 378.65 242.62 378.65 242.82 378.93 243.12 378.63 243.52 378.63 243.82 379.07 246.15 379.07 246.45 378.63 246.85 378.63 247.15 379.07 248.17 379.06 248.50 378.88 248.80 375.88 249.20 376.07 249.50 379.07 249.74 379.07 250.09 378.69 250.44 378.69 250.74 379.07 252.25 379.07 252.54 378.65 252.94 378.64 253.64 378.77 253.94 379.07 258.15 379.07 258.45 378.61 258.85 378.61 259.15 379.07 259.51 378.65 259.92 378.65 260.21 379.07 260.83 379.07 261.14 378.50 261.53 378.50 261.83 379.07 264.23 379.07 264.53 378.52 264.93 378.52 265.23 379.07 265.72 379.07 266.02 378.81 266.42 378.81 266.72 379.07 268.23 379.07 268.53 378.52 268.93 378.52 269.23 379.07 270.85 379.07 271.15 378.91 271.51 378.91 271.85 379.07 277.98 379.07 278.28 378.50 278.68 378.50 278.98 379.07 285.33 379.07 285.63 378.65 286.03 378.65 286.33 379.07 289.37 379.07 289.67 378.54 290.07 378.54 290.38 379.07 299.18 379.07 299.48 378.82 299.88 378.82 300.18 379.07 301.99 379.07 302.45 378.95 302.99 379.07 306.64 379.07 307.04 378.90 307.34 378.90 307.64 379.07 309.67 379.07 309.97 378.71 310.37 378.71 310.67 379.07 313.79 379.07 314.18 378.62 314.49 378.62 314.79 379.07 316.50 379.07 316.80 374.07 317.20 374.07 317.50 379.07 322.50 379.07 322.80 378.49 323.20 378.49 323.50 379.07 326.50 379.07 326.80 375.07 327.20 375.07 327.50 379.07 328.38 379.07 328.68 378.71 329.08 378.71 329.38 379.07 340.34 379.07 340.64 378.56 341.04 378.56 341.16 378.76 341.34 378.80 341.46 378.61 341.86 378.61 342.16 379.07 346.73 379.07 347.03 378.66 347.33 378.66 347.73 379.07 350.89 379.07 351.19 378.63 351.59 378.61 351.89 378.96 352.55 379.07 360.77 379.07 361.07 378.74 361.44 378.74 361.77 379.07 366.59 379.07 366.89 378.67 367.29 378.67 367.59 379.07 370.95 379.07 371.25 378.69 371.65 378.69 371.95 379.07 376.29 379.07 376.59 378.77 376.91 378.77 377.29 379.07 378.65 379.07 378.95 378.84 379.35 378.84 379.65 379.07 380.62 378.95 380.92 379.07 383.11 379.07 383.40 378.47 383.54 378.47 383.81 378.47 384.11 379.07 384.50 379.07 384.80 375.07 385.20 375.07 385.50 379.07 395.50 379.07 395.80 375.07 396.20 375.07 396.50 379.07 396.94 379.07 397.31 378.30 397.64 378.30 397.94 379.07 398.33 379.07 398.63 378.50 399.01 378.50 399.33 379.07 410.58 379.07 410.88 378.41 411.25 378.41 411.58 379.07 416.00 379.07 417.40 376.07 418.21 372.21 418.61 371.41 418.88 371.38 419.00 371.07 419.90 361.06 421.00 370.75 421.17 371.37 421.47 370.99 421.85 371.56 422.17 373.17 422.50 373.96 424.00 361.17 424.53 358.02 424.90 353.78 426.00 365.07 426.34 365.74 426.65 365.70 426.95 365.20 427.35 365.44 427.65 366.08 428.30 364.95 429.50 370.89 430.26 367.28 430.96 365.50 431.70 362.85 432.51 374.08 432.90 374.39 433.20 373.87 433.29 373.92 433.61 374.23 433.90 375.27 434.09 375.45 434.39 374.97 434.79 375.32 435.09 375.99 435.54 376.29 435.84 376.90 436.40 377.35 436.70 376.77 437.30 377.40 437.86 375.15 438.16 374.96 438.30 374.53 439.10 369.57 440.00 377.07 441.19 377.87 441.49 377.35 441.89 375.81 442.04 375.83 442.19 376.07 442.49 376.91 442.74 377.08 442.94 376.92 443.24 375.54 443.55 375.29 443.64 375.22 444.00 376.07 444.70 335.68 445.60 375.98 445.84 376.42 446.54 379.04 446.96 378.56 447.30 378.61 448.00 376.69 448.88 378.96 449.19 377.73 449.58 377.73 449.88 379.07 450.15 379.02 450.53 378.15 450.85 378.11 451.23 378.81 451.45 378.81 451.75 379.07 452.73 379.07 453.03 378.34 453.45 378.41 453.75 378.15 453.92 378.15 454.15 378.15 454.45 379.07 455.53 379.07 455.83 378.10 456.23 378.10 456.53 379.07 460.07 379.05 460.77 377.87 461.42 379.07 462.13 378.88 462.63 379.07 463.51 379.07 463.81 378.56 464.21 378.56 464.45 378.96 464.75 378.35 465.15 378.35 465.45 379.07 466.89 379.07 467.19 378.53 467.49 378.52 467.59 378.33 467.79 378.28 467.89 378.46 468.19 378.46 468.49 379.07 468.75 379.07 469.13 378.24 469.53 378.32 469.83 379.07 472.78 379.07 473.08 378.63 473.30 378.63 473.48 378.44 473.78 378.76 474.06 378.83 474.36 378.40 474.49 378.40 474.76 378.40 475.06 379.07 475.40 379.07 475.80 375.31 476.02 375.31 476.20 375.56 476.50 379.07 479.81 379.07 480.11 378.48 480.51 378.48 480.81 379.07 482.73 379.07 483.03 378.86 483.43 378.86 483.73 379.07 486.79 379.07 487.08 378.28 487.49 378.28 487.79 379.07 488.18 379.07 488.48 378.49 488.88 378.49 489.18 378.90 489.50 378.43 489.80 375.43 490.06 375.96 490.20 375.80 490.50 378.50 490.76 378.50 491.06 379.07 495.67 379.07 496.01 378.26 496.41 378.20 496.71 378.73 497.02 378.73 497.32 378.91 497.77 378.88 498.07 379.07 501.02 379.07 501.32 378.69 501.72 378.67 502.02 379.04 502.59 379.07 509.81 379.07 510.11 378.65 510.50 378.65 510.81 379.07 513.72 379.07 514.10 378.43 514.42 378.43 514.72 379.07 524.33 379.07 524.65 378.95 524.95 378.38 525.35 378.49 525.65 379.07 530.15 379.07 530.45 378.32 530.59 378.32 530.85 378.32 531.15 379.07 535.64 379.07 535.94 378.44 536.20 378.44 536.34 378.44 536.64 379.07 538.69 379.07 538.99 378.79 539.39 378.79 539.69 379.07 546.29 379.07 546.60 378.53 547.00 378.53 547.29 379.07 547.72 378.98 548.42 379.07 556.66 379.07 556.96 378.93 557.73 379.07 558.03 378.29 558.13 378.29 558.43 378.29 558.73 379.07 560.85 379.07 561.15 378.59 561.53 378.59 561.85 379.07 562.82 379.07 563.23 378.81 563.52 378.81 563.82 379.07 569.60 379.07 569.90 378.28 570.30 377.96 570.60 378.75 570.98 379.07 571.20 379.07 571.50 372.07 571.90 372.07 572.20 379.07 572.35 379.07 572.63 378.78 572.93 378.00 573.33 378.29 573.63 379.07 573.83 379.07 574.13 378.67 574.53 378.67 574.83 379.07 578.76 379.07 579.06 378.92 579.79 379.07 580.25 378.84 580.54 378.20 580.74 378.35 580.95 377.94 581.25 378.42 581.44 378.40 581.74 378.78 582.12 378.78 582.42 379.07 593.44 379.07 593.74 378.61 594.14 378.61 594.44 379.07 608.79 379.04 609.58 379.02 609.88 378.47 610.27 378.44 610.58 378.88 610.82 378.51 611.22 378.46 611.52 378.82 611.68 378.78 612.70 378.40 613.38 377.89 614.15 376.83 614.50 375.87 615.15 377.33 615.50 377.77 615.80 338.05 616.20 338.34 616.50 378.50 618.14 378.93 621.20 379.06 680.53 379.07" stroke="#bcbd22"/>
<path d="M157.10 385.11 176.40 385.11 176.70 381.61 177.10 381.61 177.40 385.11 206.23 385.11 209.63 384.96 210.65 384.71 211.33 384.32 211.84 383.79 212.35 382.91 213.03 380.76 213.70 376.61 214.39 380.85 214.90 382.55 215.41 383.57 216.09 384.33 216.77 384.72 217.79 384.97 219.15 385.07 232.84 385.11 233.14 384.79 233.54 384.79 233.84 385.11 239.76 385.11 239.94 385.01 240.24 384.40 240.46 384.40 240.64 384.50 240.94 385.11 242.14 385.11 242.78 384.74 243.45 385.11 244.02 385.11 244.32 384.71 244.65 384.71 245.02 385.11 247.53 385.11 247.88 384.75 248.22 384.75 248.53 385.11 248.76 385.11 249.06 384.61 249.41 384.61 249.76 385.11 255.20 385.11 255.69 384.94 255.99 384.56 256.20 384.68 257.07 384.56 257.37 384.78 257.69 384.78 257.99 385.11 259.58 385.11 259.90 384.24 260.28 384.24 260.61 385.11 260.96 384.98 262.18 385.11 262.48 384.83 262.73 384.83 263.03 384.45 263.18 384.59 263.43 384.59 263.73 385.11 264.75 385.11 265.22 384.98 265.75 385.11 266.69 385.11 266.99 384.65 267.26 384.53 267.38 384.53 267.69 384.99 267.90 385.11 268.29 385.11 268.59 384.54 268.99 384.54 269.29 385.11 271.45 385.11 271.85 384.84 272.15 384.84 272.45 385.11 283.85 385.11 284.15 384.65 284.26 384.65 284.55 384.65 284.85 385.11 287.04 385.11 287.33 384.67 287.49 384.67 287.74 384.67 288.04 385.11 300.50 385.11 300.92 385.02 301.50 385.11 307.61 385.11 307.91 384.68 308.31 384.68 308.61 385.11 318.08 385.11 318.38 384.62 318.78 384.62 319.08 385.11 319.79 385.11 320.13 384.65 320.49 384.65 320.79 385.11 322.28 385.11 322.68 384.61 322.98 384.61 323.28 385.11 337.75 385.11 338.05 384.85 338.44 384.85 338.75 385.11 343.38 385.11 343.68 384.86 343.93 384.86 344.38 385.11 349.83 385.11 350.13 384.75 350.39 384.75 350.54 384.75 350.83 385.11 353.06 385.11 353.37 384.70 353.76 384.70 354.06 385.11 356.50 385.11 356.80 383.11 357.20 383.11 357.50 385.11 358.42 385.11 358.72 384.54 359.12 384.54 359.42 385.11 360.84 385.09 361.33 384.38 361.54 384.38 362.03 385.11 371.51 385.11 371.81 384.93 372.21 384.93 372.51 385.11 395.16 385.11 395.73 384.30 395.86 384.30 396.43 385.11 397.50 385.11 397.80 380.11 398.20 380.11 398.50 385.11 403.84 385.11 404.14 384.41 404.54 384.41 404.84 385.11 406.17 385.11 406.49 384.46 406.87 384.46 407.17 385.11 411.63 385.11 412.27 384.78 412.94 385.11 414.70 385.11 415.00 379.86 415.16 379.57 415.40 379.57 415.70 384.31 415.86 384.51 416.14 384.51 416.44 385.11 418.26 385.11 418.56 384.74 418.73 384.74 418.96 384.74 419.26 385.11 421.35 385.00 421.64 385.11 423.66 385.11 423.96 384.33 424.16 384.33 424.36 383.96 424.66 384.56 424.86 384.56 425.16 385.11 426.19 385.11 426.55 384.49 426.89 384.49 427.19 385.11 428.06 385.11 428.42 384.48 428.76 384.48 429.06 385.11 430.08 385.11 430.38 384.87 430.63 384.87 431.12 385.11 431.42 384.78 431.81 384.78 432.12 385.11 435.50 385.11 435.80 368.11 436.20 368.11 436.50 385.11 438.65 385.11 438.96 384.84 439.35 384.84 439.65 385.11 440.60 385.11 440.90 384.90 441.31 384.90 442.01 384.09 442.31 384.67 442.47 384.67 442.77 385.11 445.66 385.11 445.96 384.86 446.36 384.86 446.66 385.11 450.73 385.11 451.03 384.51 451.37 384.51 451.73 385.11 459.41 385.11 459.71 384.44 459.87 384.44 460.11 384.44 460.41 385.11 466.98 385.11 467.28 384.77 467.68 384.77 467.98 385.11 468.45 384.96 468.85 384.96 469.15 385.11 472.45 385.11 472.75 384.43 473.11 384.01 473.81 385.11 474.64 385.00 475.34 385.11 478.74 385.06 480.61 384.77 481.63 384.17 482.31 383.25 483.33 379.82 484.01 374.95 484.40 369.78 485.25 378.67 486.05 382.23 486.73 383.65 487.41 384.37 488.26 384.79 489.62 385.03 490.77 385.08 491.07 384.48 491.47 384.49 491.83 385.10 497.99 385.11 498.63 385.00 498.99 385.11 502.18 385.11 502.48 384.79 502.71 384.79 502.88 384.79 503.18 385.11 503.49 385.11 503.79 384.62 504.07 384.62 504.19 384.62 504.49 385.11 513.08 385.11 513.38 384.93 513.94 385.03 514.24 384.85 514.64 384.85 514.94 385.11 526.27 385.11 526.74 385.02 527.04 384.67 527.44 384.74 527.74 385.11 529.33 385.11 529.63 384.34 530.03 384.34 530.33 385.11 531.29 385.11 531.59 384.71 531.99 384.71 532.29 385.11 533.79 385.11 534.10 384.56 534.50 384.56 534.79 385.11 548.73 385.11 549.03 384.58 549.43 384.58 549.52 384.73 549.73 384.74 549.82 384.60 550.22 384.60 550.52 385.11 557.81 385.11 558.00 384.94 558.30 379.85 558.51 379.85 558.70 380.01 559.00 385.11 564.64 385.11 564.94 384.45 565.34 384.45 565.64 385.11 572.21 385.11 572.58 385.01 573.21 385.11 577.25 385.11 577.55 384.37 577.68 384.37 577.95 384.37 578.25 385.11 584.48 385.06 585.12 385.00 585.94 384.70 586.94 383.56 587.54 381.48 588.00 378.11 588.39 381.10 589.07 383.59 589.41 384.18 589.86 384.59 590.16 384.46 590.56 384.62 590.86 384.99 591.45 385.06 595.03 385.08 595.33 384.59 595.52 384.58 595.73 384.32 596.03 384.65 596.23 384.62 596.52 384.93 596.72 384.89 598.24 384.28 599.73 383.33 600.03 382.89 600.43 382.69 600.73 382.84 603.04 382.57 603.34 381.81 603.74 381.31 604.04 381.62 604.45 381.20 605.00 379.84 605.90 382.27 606.41 383.11 607.09 383.85 607.38 384.07 607.68 383.60 608.08 383.80 608.38 384.58 609.76 384.90 610.06 384.63 610.46 384.61 610.89 385.01 611.00 385.00 611.44 384.31 611.69 384.32 612.14 385.07 612.35 385.07 612.65 384.80 613.05 384.80 613.35 385.09 613.55 385.09 680.53 385.11" stroke="#17becf"/>
<path d="M157.10 391.15 189.50 391.15 189.80 390.55 190.20 390.55 190.50 391.15 194.50 391.15 194.80 390.45 195.20 390.45 195.50 391.15 198.50 391.15 198.80 390.55 199.20 390.55 199.50 391.15 202.50 391.15 202.80 389.15 203.20 389.15 203.50 391.15 206.50 391.15 206.80 390.45 207.20 390.45 207.50 391.15 224.81 391.15 225.11 390.70 225.51 390.70 225.81 391.15 227.85 391.15 228.15 390.59 228.55 390.59 228.85 391.15 230.58 391.15 230.88 390.96 231.28 390.96 231.49 391.09 231.90 390.68 232.19 390.68 232.50 391.15 232.80 389.65 233.20 389.65 233.50 391.15 234.65 391.15 234.96 391.00 235.35 391.00 235.65 391.15 249.00 391.15 249.30 388.15 249.70 388.15 250.00 391.15 255.75 391.15 256.21 390.97 256.75 391.15 259.55 391.15 259.85 390.97 260.25 390.97 260.55 391.15 264.02 391.15 264.37 390.72 264.72 390.72 265.07 391.15 270.36 391.15 270.66 390.90 271.06 390.90 271.36 391.15 271.88 391.15 272.18 390.83 272.53 390.83 272.88 391.15 276.11 391.15 276.99 391.00 277.93 391.15 278.23 390.99 278.59 390.99 278.89 390.57 279.29 390.59 279.59 391.15 286.30 391.15 286.60 385.15 287.00 385.15 287.30 391.15 293.51 391.15 293.81 390.51 293.95 390.49 294.21 390.49 294.59 391.15 300.40 391.15 300.70 390.71 301.10 390.71 301.40 391.15 306.67 391.15 307.04 390.57 307.37 390.57 307.67 391.15 307.97 390.81 308.37 390.79 308.67 390.97 309.34 391.07 309.89 391.00 310.19 391.15 313.32 391.15 314.02 390.06 314.75 391.11 315.61 391.15 334.82 391.15 335.12 390.79 335.52 390.79 335.82 391.15 338.69 391.14 339.00 390.80 339.39 390.79 339.69 391.01 340.19 390.95 340.49 391.13 340.68 391.13 340.98 390.76 341.38 390.75 341.68 391.11 343.76 390.97 344.95 390.76 345.97 390.37 346.82 389.78 347.40 389.14 347.70 368.69 348.00 368.15 348.10 368.34 348.40 388.85 349.37 389.95 350.39 390.54 352.26 390.97 352.79 390.85 353.19 390.88 353.49 391.07 355.66 391.13 356.80 391.14 357.10 390.99 357.50 390.99 357.80 391.15 373.64 391.15 373.94 390.84 374.19 390.84 374.34 390.84 374.64 391.15 376.63 391.15 376.93 390.79 377.33 390.79 377.63 391.15 379.06 391.15 379.36 390.96 379.63 390.96 380.06 391.15 383.79 391.15 384.09 390.93 384.39 390.93 384.79 391.15 398.16 391.15 398.51 390.46 398.91 390.47 399.21 391.14 401.05 391.15 401.75 391.02 402.05 391.15 402.96 391.15 403.26 390.57 403.66 390.57 403.73 390.69 404.02 390.48 404.43 390.48 404.73 391.15 405.40 391.15 405.70 357.65 406.10 357.65 406.40 390.75 406.80 390.75 407.10 391.15 421.13 391.15 421.43 390.19 421.79 390.19 422.13 391.12 422.39 390.95 422.79 390.95 423.09 391.15 425.13 391.15 425.43 390.69 425.66 390.69 425.83 390.47 426.49 390.93 426.79 390.06 427.19 390.06 427.49 391.15 430.56 391.15 431.14 390.43 431.26 390.43 431.71 390.98 432.01 390.57 432.41 390.58 432.71 391.15 433.51 391.15 433.81 390.92 435.82 391.15 436.12 389.89 436.50 389.84 436.80 385.03 437.20 385.15 437.50 391.15 437.94 391.03 439.94 391.15 440.25 390.42 440.46 390.42 440.76 389.52 440.94 389.96 441.16 389.96 441.46 391.13 442.11 391.02 442.65 391.15 443.04 390.27 443.16 390.09 443.35 390.09 443.86 391.15 444.30 391.15 444.60 390.72 445.00 390.72 445.30 391.15 445.50 391.15 445.80 389.15 446.20 389.15 446.50 391.15 449.00 391.15 449.33 390.55 449.70 390.55 450.00 391.15 451.30 391.15 451.60 390.89 452.00 390.89 452.30 391.15 452.76 391.15 453.20 390.45 453.50 389.11 453.63 388.99 453.90 389.32 454.40 391.15 455.15 391.15 455.45 390.40 455.85 390.40 456.15 391.15 456.26 391.15 456.56 390.13 456.96 390.12 457.26 391.15 458.11 391.15 458.41 390.91 458.68 390.91 459.11 391.15 461.69 391.15 461.99 390.52 462.25 390.52 462.39 390.52 462.69 391.15 465.20 391.15 465.50 375.15 465.90 375.15 466.20 391.15 484.54 391.15 484.86 390.56 485.24 390.56 485.54 390.81 485.94 390.80 486.24 391.15 495.77 391.15 496.16 389.98 496.47 389.98 496.86 391.15 498.95 391.15 499.45 390.00 499.65 390.00 499.83 390.27 500.13 391.13 501.00 391.15 503.80 391.15 504.10 390.69 504.50 390.70 504.80 391.02 505.00 390.73 505.40 390.73 505.70 391.06 506.46 391.15 517.87 391.15 518.16 390.30 518.30 390.23 518.57 390.23 518.87 391.09 519.00 391.15 521.27 391.15 521.58 390.57 521.97 390.57 522.27 391.15 527.60 391.15 527.99 390.42 528.30 390.42 528.69 391.15 531.27 391.06 531.93 391.15 537.63 391.15 537.93 390.37 538.07 390.37 538.33 390.37 538.63 391.15 543.51 391.15 544.06 389.68 544.26 389.68 544.73 391.15 545.95 391.15 546.25 390.80 546.57 390.80 546.95 391.15 558.36 391.15 558.98 389.76 559.66 391.15 561.26 391.15 561.57 390.25 561.76 390.09 561.97 390.09 562.26 390.88 562.50 390.64 562.90 390.64 563.20 391.15 567.45 391.15 567.82 390.40 568.15 390.40 568.45 391.15 568.73 391.15 569.02 390.72 569.35 390.72 569.76 391.15 570.11 390.40 570.46 390.40 570.81 391.15 573.12 391.15 573.42 390.65 573.82 390.65 574.12 391.15 575.01 391.15 575.31 391.01 575.92 391.11 576.22 390.77 576.62 390.77 576.92 391.15 583.59 391.15 583.97 391.04 584.59 391.15 586.62 391.15 586.92 390.95 587.32 390.95 587.62 391.15 592.29 391.15 592.64 390.97 592.99 390.97 593.29 391.14 595.02 391.12 597.23 390.84 597.91 390.53 598.42 390.12 599.27 388.74 600.00 386.15 600.63 388.49 601.48 390.01 602.36 390.68 602.66 390.61 603.06 390.73 603.36 390.98 604.37 391.09 606.40 391.14 606.70 390.73 607.10 390.73 607.40 391.15 608.20 391.15 608.50 390.43 608.90 390.44 609.20 391.15 680.53 391.15" stroke="#1f77b4"/>
<path d="M157.10 397.19 226.08 397.19 226.41 396.95 226.78 396.95 227.11 397.19 228.76 397.19 229.06 396.96 229.46 396.96 229.76 397.19 232.14 397.19 233.61 396.99 233.91 397.19 234.40 397.19 234.79 396.81 235.10 396.81 235.40 397.19 237.05 397.19 237.35 396.88 237.75 396.88 238.05 397.19 238.56 397.19 238.86 396.93 239.26 396.84 239.56 397.01 240.80 395.19 241.60 390.19 242.40 388.59 243.40 388.59 244.20 391.19 245.20 395.69 247.00 397.19 247.71 397.19 248.05 396.66 248.41 396.66 248.71 397.19 249.08 397.19 249.38 396.68 249.75 396.68 250.08 397.19 259.10 397.19 259.44 396.76 259.80 396.76 260.10 397.19 261.81 397.19 262.51 397.05 262.81 397.19 265.50 397.19 265.87 381.77 266.20 381.77 266.57 397.19 278.06 397.19 278.36 397.08 280.50 397.19 280.80 395.19 281.20 395.19 281.50 397.19 291.26 397.19 291.57 396.76 291.96 396.76 292.26 397.19 293.50 397.19 293.80 394.98 293.95 394.80 294.20 394.80 294.50 397.00 294.64 397.19 295.79 397.19 296.09 396.61 296.33 396.61 296.49 396.61 296.79 397.19 298.72 397.19 299.02 397.05 299.72 397.19 305.26 397.19 305.56 396.88 305.96 396.88 306.26 397.19 308.02 397.19 308.40 396.80 308.72 396.80 309.02 397.19 315.95 397.19 316.25 396.72 316.65 396.72 316.95 397.19 317.27 397.19 317.57 396.79 317.97 396.79 318.27 397.19 323.10 397.19 323.39 396.80 323.80 396.80 324.10 397.19 331.11 397.19 331.52 397.08 332.11 397.19 342.04 397.19 342.40 396.74 342.74 396.74 343.04 397.19 347.64 397.19 348.01 396.67 348.34 396.67 348.64 396.89 348.71 396.79 349.11 396.79 349.41 397.19 353.08 397.19 353.38 396.79 353.62 396.79 353.78 396.79 354.08 397.19 358.74 397.19 359.04 397.00 359.44 397.00 359.74 397.19 363.57 397.19 363.99 397.04 364.96 397.19 365.35 397.00 365.66 397.00 365.96 397.19 368.52 397.19 368.82 396.60 369.22 396.60 369.52 397.19 374.95 397.19 375.25 396.75 375.55 396.75 375.95 397.19 379.78 397.19 380.14 396.96 380.48 396.96 380.78 397.19 381.68 397.07 382.01 397.19 401.02 397.19 401.68 397.17 401.98 396.83 402.38 396.84 402.68 397.19 406.78 397.19 407.08 396.84 407.48 396.84 407.78 397.19 409.13 397.19 409.83 397.05 410.13 397.19 411.21 397.19 411.51 396.95 411.91 396.95 412.21 397.19 416.52 397.19 416.82 396.89 417.20 396.89 417.52 397.19 419.72 397.19 420.51 397.13 420.81 396.85 421.11 396.85 421.51 397.19 423.32 397.19 423.69 396.14 424.02 396.14 424.38 397.19 425.71 397.19 426.04 396.78 426.41 396.78 426.71 397.19 429.25 397.19 429.61 396.76 429.95 396.76 430.25 397.19 432.94 397.19 433.39 396.62 433.54 396.62 433.84 396.03 434.09 395.99 434.33 395.53 434.92 396.91 435.03 396.93 435.22 396.50 435.62 396.50 435.92 397.19 436.50 397.19 436.80 395.19 436.90 395.19 437.20 394.52 437.50 396.52 437.60 396.53 437.90 397.19 440.38 397.19 440.83 397.06 441.54 397.19 441.84 395.92 442.24 395.92 442.54 397.19 443.11 397.19 443.40 396.12 443.81 396.11 444.11 397.19 447.25 397.09 447.95 394.59 448.72 397.19 449.51 397.19 449.81 395.87 450.21 395.82 450.51 397.06 450.77 396.69 451.17 396.75 451.47 397.19 451.68 397.19 452.06 395.52 452.39 395.52 452.69 396.82 453.15 396.78 453.45 397.19 458.85 397.19 459.15 396.77 459.55 396.67 460.04 397.07 460.37 396.98 461.07 397.19 462.58 397.19 462.88 396.98 463.28 396.98 463.58 396.27 463.94 395.96 464.28 396.88 464.64 397.19 465.31 397.08 467.09 397.19 467.39 396.84 467.79 396.84 468.09 397.19 468.29 397.19 468.59 396.92 468.99 396.92 469.29 397.19 469.65 397.19 469.95 396.83 470.35 396.83 470.65 397.19 474.78 397.11 487.23 397.19 487.58 396.57 487.93 396.57 488.23 397.19 490.54 397.19 491.23 397.06 491.52 396.23 491.93 396.31 492.23 397.19 494.04 397.19 494.34 396.86 494.74 396.86 495.04 397.19 496.54 397.19 496.84 396.56 497.10 396.56 497.24 396.56 497.54 397.09 497.72 396.94 498.12 396.94 498.42 397.19 498.69 397.19 498.99 396.83 499.19 396.83 499.49 396.60 500.19 397.19 505.24 397.19 505.54 396.58 505.94 396.58 506.24 397.19 507.43 397.19 507.98 397.06 508.28 396.41 508.68 396.48 509.00 397.19 509.27 397.19 509.57 396.42 509.98 396.42 510.27 397.13 510.51 396.90 510.91 396.90 511.21 397.19 520.28 397.19 520.67 396.96 520.97 396.47 521.37 396.69 521.67 397.19 522.34 397.19 522.64 396.73 523.04 396.73 523.34 397.19 528.99 397.19 529.29 396.62 529.69 396.62 529.99 397.19 530.16 397.19 530.54 396.20 530.86 396.20 531.24 397.19 532.66 397.19 532.96 396.86 533.36 396.86 533.66 397.19 540.78 397.19 541.08 396.40 541.48 396.41 541.78 397.19 544.94 397.19 545.24 397.04 545.90 397.17 546.20 396.60 546.60 396.60 546.90 397.19 547.45 397.19 547.75 396.71 548.10 396.71 548.45 397.19 548.74 397.19 549.04 396.54 549.29 396.54 549.44 396.54 549.74 397.17 550.39 397.08 550.69 397.18 552.73 397.18 553.03 396.52 553.43 396.52 553.73 397.18 559.00 397.15 559.30 392.14 559.70 392.14 560.00 397.14 561.97 397.11 562.27 396.40 562.67 396.40 562.97 397.10 566.89 397.00 567.19 396.59 567.48 396.59 567.89 396.97 569.48 396.91 569.78 396.23 570.18 396.21 570.48 396.87 572.50 396.78 572.80 393.73 573.08 393.27 573.20 393.27 573.50 396.28 573.78 396.71 574.34 396.68 575.43 396.62 575.81 395.93 576.13 395.91 576.43 396.56 579.12 396.39 579.42 395.67 579.72 395.65 579.82 395.65 580.12 396.33 580.56 396.31 580.86 395.95 581.25 395.92 581.56 396.25 583.70 396.14 584.00 373.13 584.40 373.11 584.70 396.10 587.20 396.02 587.50 395.72 587.90 395.71 588.20 396.00 588.50 396.00 588.80 390.00 589.20 389.99 589.50 395.99 589.85 395.40 590.25 395.40 590.55 395.99 596.77 396.16 597.07 395.88 597.47 395.91 597.77 396.21 602.61 396.50 602.91 396.13 603.31 396.15 603.50 396.41 603.80 394.57 604.20 394.59 604.50 396.61 612.02 396.97 626.13 397.18 680.53 397.19" stroke="#ff7f0e"/>
<path d="M157.10 403.23 229.94 403.23 230.24 402.91 230.63 402.91 230.94 403.23 231.39 403.23 231.69 402.65 232.09 402.66 232.39 403.23 233.12 402.97 233.82 403.23 241.43 403.23 241.76 403.08 242.13 403.08 242.43 403.23 251.33 403.23 251.63 402.93 251.79 402.93 252.03 402.93 252.33 403.23 252.50 403.23 252.80 400.23 253.20 400.23 253.50 403.23 257.57 403.23 257.87 402.65 258.27 402.65 258.57 403.21 263.82 403.23 264.12 402.85 264.52 402.85 264.82 403.23 265.50 403.22 265.80 399.22 266.20 399.23 266.50 403.23 270.65 403.23 271.00 402.93 271.35 402.93 271.65 403.23 272.84 403.23 273.14 402.83 273.54 402.83 273.84 403.22 274.50 403.12 274.80 401.14 275.20 401.23 275.50 403.23 277.31 403.23 277.63 403.01 278.01 403.01 278.31 403.23 280.88 403.23 281.20 402.93 281.57 402.93 281.88 403.23 293.39 403.23 293.78 402.91 294.09 402.91 294.39 403.23 296.50 403.23 296.80 402.94 297.20 402.94 297.50 403.23 301.41 403.23 301.71 403.07 302.11 403.07 302.41 403.23 303.63 403.23 303.93 402.63 304.33 402.63 304.63 403.23 305.98 403.23 306.28 402.76 306.68 402.76 306.98 403.23 331.17 403.23 331.47 402.77 331.87 402.77 332.17 403.23 334.40 403.23 334.70 402.85 335.10 402.85 335.40 403.23 338.52 403.23 338.83 403.10 339.52 403.23 341.04 403.23 341.34 402.34 341.54 402.23 341.74 402.23 342.12 403.23 346.14 403.23 346.44 403.14 347.14 403.23 353.50 403.23 353.80 401.23 354.20 401.23 354.50 403.23 355.71 403.23 356.01 402.67 356.41 402.67 356.71 403.23 359.55 403.17 359.85 402.84 360.25 402.80 360.51 403.03 360.81 402.54 361.21 402.43 361.51 402.80 361.95 402.57 362.63 401.92 363.31 400.65 363.82 398.93 364.31 396.19 365.00 389.06 365.69 396.21 366.03 398.23 366.54 400.23 367.05 401.43 367.73 402.32 368.70 402.88 369.00 402.54 369.40 402.62 369.70 403.10 369.94 403.13 370.54 403.03 371.24 403.20 374.13 403.23 374.44 402.80 374.83 402.80 375.13 403.23 378.15 403.23 378.45 402.72 378.85 402.72 379.15 403.23 381.50 403.23 381.80 401.23 382.20 401.23 382.50 403.23 397.50 403.23 397.80 399.23 398.20 399.23 398.50 403.23 400.00 403.23 400.30 399.23 400.70 399.23 401.00 403.18 401.58 403.11 402.64 403.23 402.94 402.55 403.34 402.55 403.64 403.23 405.18 403.23 405.74 403.07 406.04 402.82 406.44 402.90 406.74 403.23 407.44 403.23 407.74 402.50 408.13 402.49 408.44 403.23 409.60 403.23 409.90 402.52 410.23 402.52 410.60 403.23 419.83 403.23 420.13 402.45 420.38 402.13 420.53 402.13 421.07 403.23 422.13 403.10 422.57 403.23 424.73 403.23 425.03 402.52 425.43 402.52 425.73 403.23 428.08 403.13 428.47 403.23 430.61 403.23 430.91 402.10 431.16 401.74 431.31 401.74 431.71 403.02 432.01 402.65 432.33 402.65 432.41 402.48 432.63 402.43 432.71 402.58 433.03 402.58 433.33 403.23 433.63 403.23 433.94 402.56 434.33 402.56 434.43 402.77 434.63 402.86 434.73 402.70 435.13 402.70 435.43 403.23 436.66 403.23 436.96 402.61 437.09 402.60 437.36 402.60 437.66 403.23 440.15 403.23 440.85 397.87 441.50 403.23 444.21 403.23 444.57 402.39 444.91 402.39 445.21 402.77 445.63 402.73 445.93 403.23 447.22 403.23 447.52 402.04 447.92 402.04 448.22 403.23 451.46 403.23 451.76 402.19 452.16 402.19 452.46 403.15 452.72 402.55 453.12 402.55 453.42 403.23 457.00 403.23 457.32 402.11 457.70 402.11 458.00 403.23 458.75 403.23 459.05 401.77 459.44 401.77 459.75 403.23 462.63 403.23 462.93 402.51 463.10 402.51 463.33 402.51 463.63 403.23 470.65 403.23 470.95 402.82 471.35 402.82 471.51 403.03 471.65 403.03 471.81 402.83 472.21 402.83 472.51 403.23 473.02 403.23 473.47 403.07 474.02 403.23 481.94 403.23 482.24 402.51 482.48 402.51 482.64 402.51 482.94 403.23 486.77 403.23 487.07 402.60 487.24 402.60 487.47 402.60 487.77 403.23 489.11 403.23 489.41 402.53 489.81 402.53 490.11 403.23 492.23 403.23 492.52 402.81 492.93 402.81 493.23 403.23 499.26 403.23 499.56 402.79 499.96 402.79 500.26 403.23 502.97 403.23 503.27 402.96 503.67 402.96 503.97 403.23 505.39 403.23 505.72 402.91 506.02 402.27 506.42 402.60 506.72 403.23 508.96 403.23 509.26 403.11 509.96 403.23 514.24 403.23 514.64 402.10 514.94 402.10 515.24 403.05 515.34 403.23 515.50 403.23 517.00 401.23 518.50 397.23 520.20 376.43 521.00 381.23 521.80 393.23 523.00 400.05 524.50 403.23 526.34 403.23 526.75 401.83 527.04 401.83 527.46 403.23 529.07 403.23 529.37 402.62 529.50 402.62 529.80 399.68 530.07 400.23 530.20 400.23 530.50 403.23 532.29 403.23 532.63 402.65 533.00 402.65 533.29 403.23 536.40 403.23 536.70 402.46 537.10 402.46 537.40 403.23 541.68 403.23 541.98 402.72 542.38 402.72 542.68 403.23 545.25 403.23 545.95 402.73 546.25 403.00 546.58 402.90 546.98 402.99 547.28 403.23 549.28 403.23 549.58 402.64 549.97 402.64 550.28 403.23 551.50 403.23 551.80 400.23 552.20 400.23 552.50 403.23 561.56 403.16 561.86 402.60 562.26 402.59 562.56 403.14 566.50 402.99 566.80 399.97 567.20 399.95 567.50 402.93 574.04 402.47 574.34 402.27 574.74 402.25 575.04 402.41 578.70 402.24 581.98 402.26 582.28 401.95 582.68 401.96 582.98 402.30 583.97 402.35 584.27 402.23 585.43 402.44 585.73 401.66 586.13 401.69 586.43 402.51 593.32 402.98 599.27 403.18 680.53 403.23" stroke="#2ca02c"/>
<path d="M157.10 409.27 225.88 409.27 226.29 409.14 226.88 409.27 231.50 409.27 231.79 409.05 232.19 409.05 232.50 409.27 236.06 409.27 236.54 409.09 236.84 408.81 237.24 408.94 237.54 409.27 244.01 409.27 244.31 409.11 244.71 409.11 245.01 409.27 252.63 409.27 252.93 408.86 253.33 408.86 253.63 409.27 255.02 409.24 256.55 408.99 257.40 408.34 258.08 406.80 258.50 404.77 258.93 406.84 259.61 408.35 260.29 408.92 261.48 409.21 263.47 409.27 264.17 409.14 264.47 409.27 266.41 409.17 266.74 409.27 269.19 409.27 269.49 409.02 269.89 409.02 270.19 409.27 273.24 409.27 273.67 408.53 273.94 408.48 274.37 409.10 274.83 409.27 291.50 409.27 291.80 407.11 292.01 406.76 292.20 406.76 292.50 408.92 292.71 409.27 306.50 409.27 306.88 403.10 307.20 403.10 307.58 409.27 309.61 409.27 310.10 408.43 310.31 408.43 310.78 409.27 312.17 409.27 312.47 408.76 312.83 408.47 313.17 408.98 313.53 409.27 318.57 409.27 318.87 408.88 319.27 408.88 319.57 409.27 326.36 409.27 326.66 408.95 327.06 408.95 327.36 409.27 331.13 409.27 331.43 408.89 331.83 408.89 332.13 409.27 333.66 409.27 333.96 408.67 334.07 408.67 334.36 408.67 334.66 409.27 336.28 409.27 336.58 408.81 336.96 408.81 337.28 409.27 340.83 409.27 341.13 409.10 342.20 409.27 342.57 409.24 342.90 408.83 343.27 408.86 343.57 409.27 347.99 409.27 348.29 408.86 348.69 408.86 348.99 409.27 349.63 409.27 349.93 409.00 350.33 409.00 350.63 409.27 351.81 409.27 352.11 408.96 352.26 408.96 352.51 408.96 352.81 409.27 356.07 409.27 356.37 408.73 356.68 408.73 357.07 409.27 358.51 409.27 358.89 408.72 359.21 408.72 359.57 409.27 371.67 409.27 371.97 408.76 372.37 408.76 372.67 409.27 382.32 409.27 382.62 408.97 383.02 408.95 383.32 409.11 384.78 409.27 407.00 409.25 407.37 409.25 407.67 408.63 408.06 408.63 408.37 409.24 408.70 409.24 411.25 409.19 411.55 408.61 411.95 408.60 412.25 409.17 414.31 409.09 417.22 408.93 417.54 408.36 417.92 408.33 418.22 408.86 427.65 408.11 427.95 407.90 428.35 407.89 428.65 408.09 431.32 408.03 432.99 408.15 433.29 407.90 433.69 407.93 433.99 408.04 434.48 408.01 434.78 408.27 438.40 408.58 438.70 408.48 439.40 408.67 441.00 408.80 448.72 409.19 449.02 408.94 449.42 408.95 449.84 409.21 458.42 409.27 458.72 408.68 459.12 408.68 459.42 408.82 459.87 408.73 460.21 409.27 460.83 409.27 461.23 408.94 461.53 408.94 461.83 409.27 469.59 409.27 469.89 408.88 470.24 408.88 470.59 409.27 477.67 409.27 477.97 408.72 478.23 408.72 478.37 408.72 478.67 409.27 478.95 409.27 479.25 408.78 479.42 408.78 479.65 408.78 479.95 409.27 485.91 409.27 486.21 409.04 486.61 409.04 486.91 409.27 489.59 409.27 489.96 408.87 490.29 408.87 490.59 409.27 491.87 409.27 492.17 408.91 492.51 408.91 492.87 409.27 494.35 409.27 494.65 409.01 494.89 409.01 495.43 409.27 495.74 408.87 496.13 408.87 496.43 409.27 498.71 409.27 499.14 409.14 499.71 409.27 500.01 408.39 500.11 408.24 500.33 408.24 500.81 409.27 501.64 409.27 501.94 408.90 502.34 408.78 502.89 409.27 510.00 409.27 510.80 403.27 511.30 391.00 512.00 387.27 513.00 385.77 514.00 387.27 515.20 405.27 516.00 409.27 680.53 409.27" stroke="#d62728"/>
<path d="M157.10 415.31 224.67 415.31 224.97 414.85 225.20 414.85 225.37 414.68 225.67 415.02 225.90 415.02 226.20 415.31 228.08 415.19 229.05 415.31 229.52 415.08 230.90 415.31 234.95 415.31 235.25 414.92 235.65 414.92 235.95 415.31 236.91 415.31 237.21 414.89 237.61 414.89 237.91 415.26 238.11 415.16 238.59 415.20 238.89 414.85 239.04 414.85 239.29 414.85 239.59 415.31 243.35 415.31 243.80 415.15 244.35 415.31 248.21 415.31 248.51 415.08 248.90 415.08 249.21 415.31 260.49 415.31 260.79 415.02 261.14 415.02 261.49 415.31 267.29 415.31 267.60 415.17 268.29 415.31 269.40 415.31 269.70 409.81 270.10 409.81 270.40 415.31 280.96 415.31 281.26 414.73 281.37 414.73 281.66 414.73 281.96 415.31 288.50 415.31 288.80 409.31 289.20 409.31 289.50 415.31 292.53 415.22 292.85 414.43 293.23 414.44 293.55 415.31 294.61 415.31 294.91 414.79 295.31 414.79 295.61 415.31 302.89 415.31 303.19 414.88 303.59 414.88 303.89 415.31 310.25 415.31 310.61 414.76 310.95 414.76 311.25 415.31 314.90 415.31 315.20 414.84 315.60 414.83 315.90 415.31 318.16 415.31 318.46 415.12 318.86 415.12 319.16 415.31 325.51 415.31 325.81 414.73 325.91 414.73 326.21 414.73 326.51 415.31 329.58 415.31 329.88 414.86 330.28 414.83 330.58 415.06 330.95 415.06 331.25 415.31 332.49 415.31 332.88 414.90 333.19 414.90 333.49 415.31 338.22 415.31 338.52 414.97 338.92 414.97 339.22 415.31 354.50 415.31 354.80 413.31 355.20 413.31 355.50 415.31 359.06 415.31 359.36 414.81 359.76 414.76 360.06 414.92 360.42 414.92 360.72 415.31 369.48 415.31 369.94 415.17 370.48 415.31 384.50 415.31 384.80 413.31 385.20 413.31 385.50 415.31 391.92 415.31 392.38 414.78 392.73 414.85 393.03 415.31 396.00 415.31 396.30 413.31 396.70 413.31 397.00 415.31 404.14 415.31 404.44 414.81 404.84 414.81 405.14 415.31 406.24 415.31 406.54 414.90 406.94 414.90 407.20 415.26 407.50 414.75 407.90 414.75 408.20 415.31 410.45 415.23 416.73 415.31 417.03 414.71 417.43 414.71 417.73 415.31 421.02 415.31 421.32 415.11 421.62 415.11 422.02 415.31 428.27 415.31 428.57 415.01 428.93 415.01 429.30 415.31 429.60 410.31 429.95 409.69 430.30 414.69 430.55 415.18 430.85 414.49 431.25 414.35 431.55 415.17 431.73 415.31 434.11 415.31 434.41 415.03 434.71 415.03 435.11 415.31 435.50 415.31 435.80 412.31 436.20 412.29 436.50 415.28 436.94 415.31 448.14 415.31 448.44 414.67 448.84 414.67 449.16 415.31 454.90 415.31 455.20 415.17 455.90 415.31 457.83 415.31 458.13 414.94 458.52 414.78 458.83 415.15 459.22 415.31 460.67 415.31 460.91 415.27 461.23 414.68 461.61 414.72 461.91 415.31 465.48 415.31 465.79 414.62 466.19 414.62 466.49 415.31 472.64 415.31 473.45 415.24 473.75 414.57 474.15 414.57 474.45 415.31 476.44 415.31 476.75 414.95 476.87 414.95 477.14 414.95 477.44 415.31 480.22 415.31 480.52 414.65 480.92 414.66 481.22 415.31 495.18 415.31 495.57 414.81 495.88 414.81 496.18 415.31 503.15 415.31 503.73 414.61 504.11 414.80 504.41 415.31 504.89 415.31 505.52 414.44 506.22 415.31 509.25 415.31 509.55 414.87 509.95 414.77 510.58 414.89 510.88 415.31 514.01 415.26 514.31 414.85 514.71 414.86 515.01 415.31 515.83 415.31 516.14 414.73 516.52 414.73 516.83 415.31 517.73 415.31 680.53 415.31" stroke="#9467bd"/>
<path d="M157.10 421.35 332.50 421.35 332.80 418.35 333.20 418.35 333.50 421.35 337.50 421.35 337.80 418.35 338.20 418.35 338.50 421.35 371.50 421.35 371.80 417.35 372.20 417.35 372.50 421.35 394.87 421.35 395.27 421.11 395.56 421.11 395.87 421.35 403.94 421.35 404.28 420.96 404.64 420.96 404.94 421.35 408.17 421.35 408.47 420.74 408.87 420.74 409.17 421.35 409.88 421.35 410.18 421.00 410.58 421.00 410.88 421.35 413.51 421.35 413.81 421.10 414.21 421.11 414.51 421.35 417.92 421.35 418.26 420.13 418.62 419.82 418.96 421.02 419.34 421.35 420.62 421.35 420.93 421.02 421.32 421.02 421.62 421.35 421.96 421.35 422.26 420.83 422.66 420.83 422.96 421.27 423.32 420.68 423.69 420.77 423.99 421.35 431.91 421.35 432.45 420.54 432.61 420.54 433.15 421.35 435.14 421.35 435.50 420.66 435.80 418.66 436.20 419.35 436.50 421.35 438.06 421.35 438.36 421.08 438.83 421.14 439.13 420.59 439.50 420.45 439.83 421.21 440.20 421.35 441.00 421.35 441.30 417.35 441.70 417.34 442.00 420.93 442.39 420.93 442.70 421.35 444.19 421.35 444.57 421.15 444.89 421.15 445.19 421.35 449.47 421.35 449.77 420.73 450.17 420.73 450.47 421.35 458.26 421.35 459.03 421.31 459.33 420.97 459.73 420.97 460.03 421.35 461.85 421.35 462.15 420.87 462.31 420.87 462.61 420.25 462.85 420.64 463.00 420.65 463.31 421.35 469.03 421.35 469.33 421.00 469.73 421.00 470.03 421.35 474.37 421.35 474.67 420.56 474.83 420.56 475.07 420.56 475.37 421.35 476.36 421.24 476.71 421.35 479.15 421.35 479.45 420.75 479.76 420.75 480.15 421.35 481.00 421.35 481.31 420.86 481.63 420.86 481.93 420.52 482.00 420.64 482.29 420.64 482.58 420.40 482.99 420.47 483.32 421.35 485.95 421.35 486.25 421.19 486.65 421.19 486.95 421.35 497.56 421.35 497.72 421.27 498.02 420.49 498.32 420.51 498.42 420.39 498.72 420.82 499.02 420.82 499.32 421.35 501.29 421.35 501.59 421.09 501.86 421.09 502.29 421.35 503.22 421.35 503.52 420.96 503.92 420.96 504.22 421.35 505.00 421.25 505.30 421.35 507.25 421.35 507.55 421.12 507.81 421.12 508.25 421.35 509.80 421.35 510.43 420.24 511.13 421.35 513.47 421.35 513.77 420.87 514.17 420.87 514.47 421.35 514.81 420.93 515.21 420.93 515.51 421.35 517.49 421.35 517.79 420.61 518.19 420.61 518.49 421.35 522.73 421.35 523.11 420.62 523.43 420.62 523.73 421.35 526.88 421.35 527.18 420.63 527.58 420.61 527.88 421.05 528.26 421.06 528.56 421.35 529.34 421.35 529.63 421.09 529.91 421.09 530.37 421.35 530.67 420.79 531.07 420.79 531.37 421.35 537.19 421.35 537.49 421.16 537.89 421.16 538.19 421.35 540.61 421.35 540.91 420.87 541.31 420.87 541.61 421.35 545.48 421.35 545.78 420.80 546.06 420.80 546.18 420.80 546.48 421.35 548.50 421.35 548.80 407.35 548.95 407.35 549.20 407.35 549.50 421.35 549.97 421.35 550.66 420.42 551.36 421.35 551.52 421.35 551.82 421.05 552.22 421.05 552.52 421.35 553.03 421.11 553.38 421.11 553.68 421.35 556.37 421.35 556.67 421.20 557.15 421.22 557.45 420.75 557.85 420.76 558.14 421.33 558.44 420.63 558.84 420.63 559.14 421.07 559.61 420.98 559.91 421.35 563.28 421.35 563.59 420.58 563.74 420.58 563.99 420.58 564.28 421.35 564.62 421.35 564.92 420.88 565.32 420.79 565.62 420.96 565.95 420.96 566.25 421.35 573.50 421.35 573.80 407.35 573.94 407.35 574.20 407.35 574.50 421.35 576.74 421.35 577.04 420.62 577.44 420.63 577.50 420.76 577.85 416.35 578.20 416.35 578.50 421.35 680.53 421.35" stroke="#8c564b"/>
<path d="M157.10 427.39 300.50 427.39 300.80 425.39 301.20 425.39 301.50 427.39 401.01 427.39 401.31 427.08 401.71 427.08 402.01 427.39 402.44 427.39 402.75 426.94 403.14 426.94 403.44 427.39 405.81 427.39 406.18 426.87 406.58 426.87 406.88 427.39 407.31 427.39 407.68 427.00 408.01 427.00 408.31 427.39 409.41 427.39 409.72 426.66 410.11 426.66 410.41 427.39 411.58 427.39 411.88 426.98 412.27 426.98 412.58 427.39 414.71 427.39 415.01 426.93 415.67 426.86 416.08 426.92 416.38 427.39 416.69 427.39 417.03 427.10 417.39 427.10 417.69 427.39 423.75 427.39 424.05 427.12 424.45 427.12 424.90 427.39 425.20 426.90 425.36 426.90 425.60 426.90 425.90 427.39 430.48 427.39 430.80 426.80 431.18 426.80 431.48 427.39 433.93 427.39 434.23 427.24 434.82 427.34 435.12 426.93 435.52 426.93 435.82 427.39 436.23 427.39 436.53 426.78 436.73 426.78 436.93 426.59 437.23 427.12 437.43 427.12 437.73 427.39 442.29 427.39 442.59 427.09 442.99 427.09 443.29 427.39 448.94 427.39 449.24 426.96 449.64 426.96 449.94 427.39 455.11 427.39 455.43 426.92 455.79 426.92 456.13 427.39 459.91 427.39 460.38 427.23 460.91 427.39 462.79 427.39 463.04 427.33 463.34 426.56 463.74 426.62 464.04 427.39 464.69 427.39 464.99 426.98 465.39 426.98 465.69 427.39 466.60 427.39 467.52 427.22 468.23 427.39 479.52 427.39 479.93 427.07 480.22 427.07 480.52 427.39 484.50 427.39 484.80 425.39 485.20 425.39 485.50 427.39 493.51 427.39 493.87 427.01 494.21 427.01 494.51 427.39 501.10 427.39 501.40 426.75 501.52 426.75 501.80 426.75 502.10 427.39 509.83 427.39 510.19 427.01 510.53 427.01 510.83 427.39 521.23 427.39 521.53 427.15 521.93 427.15 522.23 427.39 523.15 427.39 523.45 426.82 523.85 426.82 524.15 427.36 530.01 427.39 530.31 427.01 530.71 427.01 531.01 427.39 532.36 427.39 532.66 427.22 533.63 427.39 533.93 427.17 534.33 427.17 534.50 427.30 534.84 425.39 535.20 425.39 535.50 427.39 544.50 427.39 544.87 424.89 545.20 424.89 545.50 427.39 546.50 427.39 547.00 421.39 547.50 427.25 547.69 427.00 548.09 427.00 548.39 427.39 552.00 427.39 552.50 424.02 553.00 426.93 553.22 426.98 553.52 427.39 554.50 427.39 554.80 425.39 554.90 425.39 555.20 425.39 555.50 427.39 555.92 426.87 556.28 426.87 556.58 427.39 560.00 427.39 560.30 423.39 560.80 427.39 561.20 427.29 561.50 426.68 561.70 426.58 561.90 426.53 562.20 427.00 562.39 427.01 564.50 426.51 564.80 423.94 565.00 423.89 565.20 423.64 565.50 425.64 565.83 425.37 566.12 425.48 568.70 423.39 569.20 425.90 569.62 424.50 569.92 424.05 571.80 417.89 572.40 425.36 572.65 425.23 573.05 425.23 573.35 425.39 574.00 425.39 576.00 424.39 577.00 425.39 577.44 425.17 577.85 424.45 578.14 424.31 578.44 424.67 579.00 424.39 579.60 410.89 580.30 424.39 582.00 426.39 584.46 427.21 585.46 427.39 680.53 427.39" stroke="#e377c2"/>
<path d="M157.10 433.43 346.50 433.43 346.80 429.43 347.20 429.43 347.50 433.43 359.50 433.43 359.80 431.43 360.20 431.43 360.50 433.43 381.50 433.43 381.80 431.43 382.20 431.43 382.50 433.43 401.69 433.43 402.07 432.92 402.39 432.92 402.69 433.36 403.39 433.43 404.11 433.20 404.34 433.20 404.64 433.43 408.46 433.43 408.79 432.42 409.16 432.42 409.49 433.43 410.65 433.43 410.95 432.74 411.36 432.74 411.65 433.43 413.97 433.43 414.31 432.93 414.67 432.93 414.97 433.43 416.85 433.43 417.20 433.22 417.55 433.22 417.85 433.43 421.23 433.43 421.48 433.11 421.78 432.27 421.93 432.27 422.18 432.59 422.48 433.43 424.86 433.43 425.34 433.23 425.64 432.55 425.76 432.63 426.04 432.37 426.34 433.08 426.76 433.43 427.15 432.97 427.38 432.97 427.55 432.80 428.38 433.43 433.58 433.43 433.96 432.65 434.11 432.57 434.37 432.65 434.67 433.35 434.81 433.43 436.40 433.43 436.70 433.12 437.10 433.12 437.40 433.43 438.92 433.43 439.22 433.11 439.62 433.11 439.92 433.43 447.64 433.43 448.09 433.34 448.39 433.12 448.79 433.19 449.09 433.40 449.70 433.37 450.00 401.33 450.40 401.26 450.70 433.17 451.54 432.56 452.05 431.58 452.56 429.57 453.00 426.43 453.41 429.53 454.09 431.95 454.39 432.01 454.79 432.43 455.09 433.08 455.96 433.33 461.58 433.43 461.88 432.86 462.25 432.86 462.58 433.43 466.02 433.43 466.33 433.18 466.72 433.18 467.16 433.43 467.46 432.92 467.86 432.92 468.02 433.15 468.32 432.49 468.69 432.49 469.02 433.43 471.47 433.43 471.77 433.15 471.94 433.15 472.17 433.15 472.47 433.43 478.22 433.43 478.57 432.74 478.92 432.74 479.22 433.43 481.20 433.43 481.50 432.78 481.74 432.78 481.90 432.40 482.04 432.38 482.20 432.72 482.44 432.72 482.74 433.43 485.01 433.43 485.31 432.77 485.71 432.76 486.01 433.43 486.52 433.43 486.82 432.98 487.07 432.98 487.22 432.98 487.52 433.43 494.47 433.43 494.77 432.79 495.17 432.79 495.47 433.43 497.16 433.43 497.46 433.06 497.86 433.06 498.16 433.43 501.67 433.43 501.97 433.05 502.37 433.05 502.67 433.43 504.91 433.43 505.21 432.99 505.50 432.99 505.61 432.78 505.91 432.62 507.00 430.43 508.00 417.43 508.80 425.43 510.20 407.43 510.90 416.72 511.50 403.43 512.30 415.43 513.00 406.39 513.80 417.43 514.50 403.43 515.20 415.43 516.00 407.43 517.00 419.43 518.30 397.43 519.50 393.43 520.50 403.43 521.30 420.90 522.50 425.43 523.20 429.43 524.00 427.43 524.49 428.04 524.79 428.22 526.00 429.93 528.00 431.93 530.00 433.43 530.71 433.43 531.10 432.74 531.41 432.74 531.71 433.43 532.95 433.37 533.31 432.85 533.65 432.91 533.95 433.43 534.33 433.25 534.67 433.25 534.97 433.43 537.98 433.43 538.28 433.07 538.64 433.07 538.94 432.75 539.34 432.79 539.64 433.43 548.75 433.43 549.05 432.93 549.45 432.93 549.75 433.43 556.66 433.43 557.09 433.12 557.39 432.55 557.79 432.83 558.13 433.43 680.53 433.43" stroke="#7f7f7f"/>
<path d="M157.10 439.47 334.10 439.47 334.40 433.47 334.80 433.47 335.10 439.47 401.17 439.47 401.56 438.85 401.87 438.85 402.17 439.47 405.29 439.47 405.58 438.93 405.98 438.93 406.29 439.47 410.43 439.47 410.74 439.22 411.13 439.22 411.43 439.47 414.88 439.47 415.18 439.32 415.58 439.32 415.88 439.47 417.37 439.47 417.67 438.87 418.07 438.87 418.19 439.10 418.37 439.09 418.89 438.30 419.59 439.47 423.82 439.47 424.12 438.85 424.52 438.85 424.82 439.47 427.54 439.47 427.84 439.35 429.16 439.47 429.46 439.00 429.61 439.00 429.86 439.00 430.16 439.47 436.80 439.47 437.10 438.70 437.50 438.70 437.80 439.47 438.50 439.47 438.80 436.47 439.20 436.47 439.50 439.47 439.81 439.47 440.15 439.16 440.51 439.16 440.81 439.47 453.25 439.47 453.43 439.42 453.75 438.89 454.13 438.94 454.43 439.47 454.74 439.47 455.11 438.79 455.44 438.79 455.79 439.47 463.06 439.47 463.36 438.75 463.76 438.75 464.06 439.47 465.50 439.47 465.80 436.47 466.20 436.47 466.50 439.47 471.11 439.47 471.43 439.37 472.11 439.47 476.04 439.47 476.34 439.00 476.74 439.00 477.04 439.47 487.08 439.47 487.38 439.30 487.78 439.30 488.08 439.47 489.98 439.46 490.28 439.26 490.68 439.25 490.98 439.44 492.21 439.38 493.00 439.27 493.30 438.73 493.70 438.64 494.00 439.05 494.13 439.00 494.49 437.37 494.83 437.16 495.19 438.33 495.90 437.42 496.25 150.72 496.70 145.97 497.15 150.72 497.50 437.42 497.61 437.60 498.63 438.67 498.96 438.50 499.36 438.67 499.66 439.13 499.90 439.19 500.20 422.25 500.60 422.31 500.90 439.35 501.01 439.36 502.52 439.44 502.82 438.68 503.22 438.69 503.52 439.46 508.09 439.47 508.39 439.01 508.79 439.00 509.09 439.47 511.50 439.47 511.80 435.47 512.20 435.47 512.50 439.47 514.70 439.47 515.00 439.03 515.29 439.03 515.70 439.47 516.10 439.18 516.50 439.18 516.80 439.47 527.00 439.47 527.30 439.06 527.71 439.06 528.00 439.47 528.72 439.37 529.42 439.47 533.01 439.47 533.48 439.28 534.01 439.47 536.63 439.47 536.93 438.72 537.05 438.72 537.33 438.72 537.63 439.47 538.89 439.47 539.19 438.90 539.59 438.90 539.89 439.47 543.58 439.47 543.88 438.84 544.28 438.84 544.58 439.47 545.16 439.47 545.47 438.76 545.66 438.59 545.87 438.59 545.97 438.74 546.27 439.47 546.64 438.79 547.04 438.79 547.28 439.32 547.59 438.70 547.98 438.70 548.28 439.47 549.16 439.47 549.46 438.98 549.86 438.98 550.16 439.47 555.87 439.47 556.17 438.87 556.57 438.71 556.87 439.30 557.29 439.47 558.42 439.47 558.72 438.89 559.12 438.89 559.42 439.47 562.46 439.47 562.85 438.73 563.16 437.57 563.55 438.21 563.93 439.47 568.70 439.47 569.00 438.87 569.35 429.87 569.70 430.47 570.00 439.47 574.41 439.47 574.71 438.71 575.11 438.71 575.41 439.47 580.83 439.47 581.13 438.70 581.25 438.70 581.53 438.70 581.83 439.47 581.94 439.47 582.24 438.94 583.20 438.97 583.50 438.68 583.60 438.84 583.90 438.85 584.20 439.47 584.52 438.85 584.65 438.85 584.92 438.85 585.22 439.47 585.50 439.47 586.30 429.47 588.04 429.47 588.34 428.77 588.73 428.77 589.50 438.98 589.74 438.98 590.04 439.47 680.53 439.47" stroke="#bcbd22"/>
<path d="M157.10 445.51 359.50 445.51 359.80 442.51 360.20 442.51 360.50 445.51 367.50 445.51 367.80 442.51 368.20 442.51 368.50 445.51 381.50 445.51 381.80 442.51 382.20 442.51 382.50 445.51 385.92 445.45 387.62 445.19 388.81 444.67 389.83 443.70 390.68 442.15 391.36 439.97 391.87 437.38 392.70 429.78 393.06 433.08 393.57 436.02 394.08 437.72 394.62 438.78 395.62 439.96 399.62 443.97 399.93 443.84 400.32 444.11 400.62 444.64 401.22 444.92 403.26 445.40 413.84 445.51 414.14 444.72 414.48 444.72 414.84 445.22 415.00 444.88 415.40 444.88 415.70 445.51 415.87 445.51 416.17 445.21 416.57 445.21 417.00 445.51 417.36 445.33 417.66 444.81 418.06 444.99 418.36 445.51 419.75 445.36 420.11 445.51 421.07 445.51 421.45 444.86 421.77 444.86 422.07 445.51 424.61 445.51 425.02 445.13 425.31 445.13 425.61 445.51 430.63 445.51 430.93 445.11 431.33 445.12 431.63 445.51 433.71 445.51 434.01 445.36 434.41 445.36 434.71 445.51 436.20 445.51 436.58 445.19 436.90 445.19 437.20 445.51 438.50 445.51 438.80 445.16 438.96 445.16 439.20 445.16 439.50 445.51 447.16 445.43 448.47 445.51 448.77 444.85 449.16 444.85 449.47 445.51 450.82 445.51 451.52 444.37 451.82 444.91 451.90 444.85 452.20 445.17 452.55 445.17 452.85 445.51 453.41 445.14 453.68 445.14 453.98 445.51 454.92 445.51 455.22 445.05 455.62 445.05 455.92 445.51 461.26 445.51 461.56 445.11 461.70 445.11 462.00 444.50 462.26 444.85 462.40 444.85 462.70 445.51 466.69 445.51 467.01 445.39 467.69 445.51 476.43 445.51 476.73 445.00 477.13 445.00 477.43 445.51 482.75 445.51 483.05 444.82 483.45 444.82 483.75 445.51 486.50 445.51 486.80 442.51 487.20 442.51 487.50 445.51 496.73 445.51 497.03 445.23 497.43 445.23 497.73 445.51 499.95 445.51 500.25 444.97 500.65 444.97 500.95 445.51 502.12 445.51 502.42 444.76 502.54 444.76 502.82 444.76 503.12 445.51 507.62 445.51 507.92 444.98 508.32 444.98 508.62 445.51 509.49 445.51 510.02 445.32 510.49 445.51 522.64 445.51 522.94 445.31 523.34 445.31 523.64 445.51 527.41 445.51 527.71 445.12 528.11 445.12 528.41 445.51 529.00 445.51 529.30 431.01 529.70 431.01 530.00 445.51 536.33 445.51 536.71 445.06 537.03 445.06 537.33 445.51 539.38 445.51 539.68 445.30 540.08 445.30 540.38 445.51 541.54 445.51 541.84 444.95 541.98 444.95 542.24 444.95 542.54 445.51 543.00 445.51 543.34 428.51 543.70 428.51 544.00 445.51 545.09 445.51 545.55 445.35 546.09 445.51 548.05 445.51 548.44 444.74 548.75 444.74 549.05 445.51 550.33 445.51 551.03 444.10 551.74 445.51 552.11 444.91 552.51 444.91 552.81 445.51 553.64 445.08 554.71 445.51 555.01 444.81 555.41 444.81 555.71 445.51 556.47 445.51 556.77 444.72 556.94 444.72 557.17 444.72 557.47 445.51 680.53 445.51" stroke="#17becf"/>
<path d="M157.10 451.55 304.83 451.55 308.40 451.49 310.44 451.24 311.63 450.85 312.65 450.20 313.50 449.14 314.01 448.01 314.52 446.06 314.86 443.95 315.40 438.01 315.88 442.48 316.22 444.07 316.56 444.94 316.90 445.36 317.24 445.54 319.20 445.47 319.50 414.50 319.90 414.59 320.20 445.67 320.81 445.79 321.32 445.68 321.66 445.35 322.00 444.63 322.51 442.19 322.90 438.32 323.53 444.89 324.04 447.46 324.55 448.90 325.23 449.96 326.08 450.67 327.27 451.16 328.80 451.43 332.03 451.54 347.50 451.55 347.80 447.55 348.20 447.55 348.50 451.55 354.50 451.55 354.80 448.55 355.20 448.55 355.50 451.55 357.50 451.55 357.80 449.55 358.20 449.55 358.50 451.55 363.50 451.55 363.80 447.55 364.20 447.55 364.50 451.55 365.50 451.55 365.80 449.55 366.20 449.55 366.50 451.55 394.90 451.55 395.20 451.18 395.60 451.18 395.90 451.55 396.63 451.55 396.93 451.41 397.33 451.41 397.63 451.55 401.69 451.55 401.99 451.07 402.38 451.07 402.69 451.55 403.20 451.55 403.60 451.13 403.90 451.13 404.20 451.55 404.57 451.30 404.97 451.30 405.27 451.55 406.03 451.55 406.48 450.60 406.73 450.60 407.18 451.08 407.56 450.98 407.86 451.43 408.30 451.55 412.37 451.55 412.67 451.13 413.07 451.13 413.37 451.55 417.34 451.55 417.73 451.41 418.04 450.70 418.43 450.84 418.73 451.55 423.27 451.55 423.66 450.81 423.97 450.81 424.27 451.43 424.45 451.25 424.85 451.25 425.15 451.55 431.05 451.55 431.35 451.11 431.65 451.11 432.05 451.48 434.22 451.55 434.52 451.07 434.88 451.07 435.18 450.69 435.58 450.76 435.88 451.55 444.80 451.55 445.10 450.83 445.25 450.83 445.50 450.83 445.84 451.55 446.14 451.22 446.44 451.22 446.84 451.55 450.72 451.55 451.03 451.42 451.72 451.55 452.61 451.46 453.36 451.55 453.66 451.29 454.05 451.20 454.36 451.46 454.75 451.55 466.11 451.55 466.41 451.10 466.81 451.01 467.11 451.29 467.40 451.29 467.70 451.55 469.87 451.55 470.17 450.83 470.57 450.83 470.87 451.55 474.42 451.55 474.72 450.92 475.00 450.92 475.12 450.92 475.42 451.55 476.74 451.55 477.04 450.93 477.44 450.93 477.74 451.55 479.19 451.55 479.49 451.03 479.88 451.03 480.19 451.55 481.24 451.55 481.54 450.85 481.80 450.85 481.94 450.85 482.24 451.55 485.88 451.55 486.18 450.77 486.57 450.77 486.88 451.55 491.86 451.55 492.17 450.83 492.56 450.83 492.86 451.55 493.38 451.55 493.68 451.20 493.91 451.20 494.21 450.96 494.38 451.16 494.61 451.16 494.91 451.55 495.64 451.55 495.94 451.07 496.34 451.07 496.48 451.30 496.78 450.96 496.93 450.96 497.18 450.96 497.48 451.55 503.96 451.55 504.26 451.35 504.58 451.35 504.96 451.55 506.52 451.55 506.82 451.23 506.96 451.22 507.22 451.22 507.52 451.55 511.11 451.55 511.41 450.82 511.81 450.83 512.11 451.55 512.46 451.16 512.66 451.15 512.86 451.15 513.16 451.54 513.35 451.55 513.50 451.22 513.85 447.90 514.05 447.90 514.20 448.09 514.50 451.08 514.81 451.08 515.11 451.55 515.92 451.55 516.31 450.98 516.62 450.98 516.92 451.55 520.46 451.55 520.76 450.79 521.16 450.79 521.46 451.48 521.70 451.21 522.10 451.21 522.40 451.55 525.64 451.55 525.94 451.02 526.34 451.02 526.64 451.55 528.70 451.55 529.00 451.24 529.40 451.24 529.70 451.55 680.53 451.55" stroke="#1f77b4"/>
<path d="M157.10 457.59 344.50 457.59 344.80 455.59 345.20 455.59 345.50 457.59 397.02 457.59 397.32 457.45 397.96 457.56 398.33 457.39 398.66 457.39 398.96 457.59 399.69 457.59 400.01 457.25 400.42 457.25 400.71 457.59 401.77 457.50 407.03 457.59 407.34 457.38 407.73 457.38 408.03 457.59 408.87 457.59 409.17 457.02 409.57 457.02 409.87 457.59 419.50 457.59 419.80 455.59 420.20 455.59 420.50 457.44 420.95 457.41 421.25 457.59 423.29 457.59 423.93 457.03 424.63 457.59 425.27 457.59 425.57 456.89 425.97 456.89 426.27 457.59 427.50 457.58 427.80 457.23 428.20 457.24 428.50 457.59 438.71 457.59 439.01 456.81 439.30 456.81 439.41 456.81 439.71 457.59 448.40 457.59 448.82 457.50 450.81 457.59 451.11 457.37 451.51 457.37 451.81 457.59 456.70 457.59 457.00 456.93 457.40 456.93 457.70 457.59 462.39 457.59 462.76 456.82 463.09 456.82 463.39 457.59 464.50 457.59 464.80 454.59 465.20 454.59 465.50 457.59 466.45 457.59 466.75 456.56 467.15 456.17 467.45 457.20 467.84 457.59 471.06 457.59 471.36 457.32 471.63 457.27 472.33 457.59 473.04 457.59 473.33 457.43 473.74 457.43 474.04 457.59 476.67 457.59 477.05 456.53 477.18 456.53 477.45 456.07 477.75 457.00 477.88 457.00 478.18 457.59 480.32 457.59 480.62 457.10 480.73 457.10 481.03 456.44 481.32 456.92 481.43 456.92 481.73 457.59 483.32 457.59 483.67 457.49 485.90 457.59 486.22 456.86 486.61 456.86 486.90 457.59 496.43 457.57 496.73 457.11 497.10 457.11 497.43 457.59 498.89 457.59 499.19 457.41 499.60 457.38 499.95 456.89 500.30 456.94 500.60 457.59 502.88 457.51 503.92 457.59 504.22 457.00 504.62 457.00 504.92 457.42 505.15 456.86 505.55 456.86 505.85 457.59 507.70 457.59 508.00 442.59 508.40 442.59 508.70 457.59 509.32 457.59 509.62 457.29 510.02 457.29 510.32 457.59 515.59 457.59 515.89 457.02 516.29 457.00 516.59 457.48 517.25 457.59 519.52 457.59 519.82 457.31 520.22 457.31 520.33 457.42 521.00 457.30 521.30 456.89 521.70 456.91 522.02 457.59 522.32 457.02 522.72 457.02 522.87 457.31 523.02 457.27 523.57 456.42 524.15 457.30 524.30 457.37 524.45 457.17 524.85 457.17 525.15 457.59 525.90 457.59 526.32 456.15 526.60 456.16 527.02 457.59 527.20 457.59 527.53 456.82 527.90 456.82 528.21 457.59 534.88 457.59 535.18 457.27 535.58 457.27 535.88 457.59 546.69 457.59 546.99 457.32 547.39 457.32 547.74 457.59 548.03 457.20 548.43 457.20 548.74 457.59 554.01 457.59 554.39 456.93 554.71 456.93 555.01 457.59 560.40 457.59 560.70 457.37 561.10 457.37 561.40 457.59 562.52 457.59 563.22 456.85 563.44 457.11 563.74 456.89 564.49 457.59 564.79 456.83 565.17 456.64 565.49 457.40 565.70 457.56 568.50 457.59 568.84 453.59 569.20 453.59 569.50 457.59 680.53 457.59" stroke="#ff7f0e"/>
<path d="M157.10 463.63 291.74 463.60 292.76 463.51 293.44 463.31 293.95 462.97 294.29 462.56 294.97 460.82 295.50 457.63 295.99 460.65 296.67 462.50 297.18 463.09 297.69 463.37 299.56 463.61 358.21 463.58 359.40 463.34 360.25 462.66 360.93 461.08 361.40 458.63 361.95 461.35 362.63 462.77 363.48 463.37 365.01 463.60 399.97 463.63 400.27 462.89 400.54 462.89 400.67 462.89 400.97 463.63 401.47 463.63 401.77 462.98 402.17 462.98 402.47 463.63 404.09 463.63 404.39 463.10 404.79 463.10 405.09 463.63 408.33 463.63 408.63 462.94 409.03 462.94 409.33 463.62 410.30 463.63 410.60 463.05 411.00 463.05 411.30 463.63 416.39 463.63 417.13 463.06 417.83 463.63 428.58 463.63 429.09 462.58 429.27 462.58 429.49 462.75 429.79 463.38 430.10 463.38 430.40 463.63 438.93 463.63 439.23 463.12 439.63 463.12 439.93 463.63 442.82 463.63 443.21 463.25 443.52 463.25 443.82 463.63 444.26 463.63 444.56 463.20 444.96 463.20 445.26 463.63 447.34 463.63 447.69 463.56 448.04 462.87 448.39 462.94 448.69 463.63 451.49 463.63 451.79 463.21 452.05 463.21 452.19 463.21 452.49 463.63 460.60 463.63 461.01 463.47 461.31 462.87 461.71 463.03 462.01 463.63 465.48 463.63 465.82 463.12 466.18 463.12 466.48 463.63 468.33 463.63 468.71 463.00 469.03 463.00 469.33 463.63 471.94 463.63 472.24 463.37 472.62 463.37 472.94 463.63 476.68 463.63 476.98 463.46 477.38 463.43 478.31 463.63 483.70 463.63 484.00 458.63 484.40 458.63 484.70 463.63 489.18 463.63 489.48 463.36 489.88 463.36 490.18 463.63 495.17 463.63 495.57 463.24 495.87 463.24 496.17 463.63 499.01 463.63 499.48 462.89 499.71 462.89 500.13 463.63 500.29 463.61 500.59 462.94 500.95 462.94 501.29 463.62 501.83 463.63 502.13 463.41 502.53 463.41 502.83 463.63 510.59 463.63 510.89 463.42 511.31 463.43 511.61 463.08 512.00 463.08 512.30 463.63 521.60 463.63 521.90 463.12 522.26 463.12 522.60 463.63 528.35 463.63 528.72 462.86 529.05 462.86 529.35 463.63 532.71 463.63 533.01 463.32 533.31 463.32 533.71 463.63 534.29 463.63 534.59 463.26 534.99 463.26 535.29 463.63 536.48 463.63 536.78 462.95 537.18 462.76 537.48 463.27 537.65 463.19 538.00 463.32 538.30 462.96 538.70 463.00 539.00 463.63 541.47 463.53 543.18 463.63 543.51 463.41 543.88 463.41 544.18 463.63 546.82 463.62 547.12 463.17 547.52 462.94 547.82 463.36 548.19 463.54 548.78 463.41 549.29 463.11 549.80 462.41 550.14 461.48 550.48 459.85 551.00 454.08 551.67 460.48 552.01 461.96 552.35 462.68 552.86 463.22 553.37 463.46 554.22 463.59 680.53 463.63" stroke="#2ca02c"/>
<path d="M157.10 469.67 307.50 469.67 307.80 466.67 308.20 466.67 308.50 469.67 319.45 469.65 321.15 469.40 322.00 468.77 322.68 467.29 323.20 464.67 323.70 467.22 324.38 468.74 325.23 469.39 326.59 469.63 386.50 469.67 386.80 465.67 387.20 465.67 387.50 469.67 401.74 469.67 402.07 469.31 402.44 469.31 402.74 469.67 407.00 469.67 407.30 463.67 407.70 463.67 408.00 469.67 419.88 469.67 420.26 468.58 420.59 468.58 420.89 469.67 421.70 469.67 422.00 469.04 422.30 469.04 422.40 469.04 422.70 469.67 423.23 469.67 423.46 469.42 423.83 468.54 424.16 468.79 424.46 469.67 424.79 468.91 425.19 468.91 425.49 469.67 427.77 469.67 428.07 468.94 428.47 468.94 428.77 469.15 429.15 468.91 429.49 469.46 429.85 469.67 435.74 469.67 436.04 469.05 436.44 469.04 436.74 469.67 440.33 469.67 440.63 469.29 441.00 469.29 441.33 469.67 442.76 469.67 443.17 469.32 443.47 468.64 443.87 468.98 444.17 469.67 452.93 469.67 453.23 469.20 453.63 469.21 453.93 469.67 455.19 469.67 455.62 469.39 455.89 469.39 456.19 469.67 458.01 469.67 458.31 469.34 458.71 469.34 459.01 469.67 459.36 469.67 459.66 469.15 460.06 469.15 460.36 469.67 465.22 469.67 465.52 468.97 465.65 468.97 465.92 468.97 466.22 469.67 472.00 469.67 472.30 468.87 472.45 468.87 472.70 468.87 473.00 469.67 481.50 469.67 481.80 467.67 482.20 467.67 482.50 469.67 485.84 469.67 486.14 469.23 486.54 469.23 486.84 469.50 486.98 469.35 487.38 469.35 487.68 469.67 489.16 469.67 489.46 469.37 489.62 469.37 489.86 469.37 490.16 469.67 494.22 469.67 494.52 469.46 494.89 469.46 495.22 469.67 500.09 469.67 500.39 469.05 500.50 469.05 500.79 469.05 501.09 469.67 502.00 469.67 504.00 468.67 504.60 463.67 505.20 468.67 507.00 467.67 508.30 465.67 509.00 459.67 509.60 466.67 511.30 460.67 511.90 466.61 513.60 460.67 514.20 466.20 514.31 466.20 514.61 466.67 515.14 466.67 515.50 466.03 515.84 466.61 516.14 467.81 516.50 468.67 517.37 469.25 517.67 468.66 518.07 468.88 518.37 469.67 519.30 469.67 519.60 469.43 520.00 469.43 520.30 469.67 520.71 469.67 521.01 468.84 521.14 468.67 521.41 468.62 521.84 469.11 522.10 469.14 522.40 469.67 528.04 469.67 528.34 469.20 528.74 469.20 529.04 469.67 533.23 469.67 533.53 469.34 533.93 469.34 534.23 469.67 536.70 469.67 537.00 469.22 537.40 469.22 537.70 469.67 551.72 469.67 552.02 469.24 552.18 469.24 552.42 469.24 552.72 469.67 556.73 469.67 557.03 469.56 558.30 469.67 558.60 469.24 558.98 469.24 559.30 469.63 559.91 469.54 560.21 469.67 563.61 469.67 563.91 469.30 564.31 469.30 564.61 469.67 565.95 469.67 566.27 469.17 566.67 469.17 566.97 469.67 569.59 469.67 569.89 468.91 570.03 468.91 570.29 468.91 570.59 469.67 570.94 469.25 571.22 469.25 571.34 469.26 571.64 469.67 573.46 469.67 573.76 468.57 573.84 468.46 574.16 468.46 574.54 469.67 575.80 469.67 576.10 468.88 576.50 468.88 576.80 469.67 579.83 469.67 580.13 469.01 580.23 469.01 580.53 469.01 580.83 469.67 593.72 469.67 594.02 469.41 594.42 469.41 594.72 469.67 598.02 469.67 598.32 469.15 598.72 469.15 599.02 469.67 600.04 469.67 600.34 469.31 600.63 469.31 601.04 469.67 601.54 469.67 601.99 469.47 602.25 469.47 602.54 469.67 608.00 469.67 608.30 467.67 608.70 467.67 609.00 469.67 680.53 469.67" stroke="#d62728"/>
<path d="M157.10 475.71 288.50 475.71 288.80 472.71 289.20 472.71 289.50 475.71 306.50 475.71 306.80 471.71 307.20 471.71 307.50 475.71 378.44 475.71 382.35 475.57 383.37 475.36 384.22 475.01 385.58 473.95 386.77 472.38 389.32 468.02 390.00 467.20 390.70 466.75 391.00 441.71 391.40 441.79 391.70 466.95 392.72 468.07 394.82 471.70 395.12 471.81 395.52 472.42 395.82 473.23 396.46 473.99 396.76 473.62 397.16 473.96 397.46 474.82 398.50 475.31 399.86 475.60 405.67 475.71 405.97 474.94 406.37 474.94 406.67 475.71 409.94 475.71 410.24 475.14 410.63 475.14 410.94 475.71 411.57 475.71 411.87 474.92 412.27 474.92 412.57 475.71 415.72 475.64 416.02 474.91 416.42 474.83 416.72 475.44 417.20 475.17 417.71 474.59 418.05 473.88 418.56 471.92 419.07 467.87 419.50 461.21 419.92 467.75 420.26 470.81 420.60 472.70 420.94 473.86 421.28 474.50 421.60 474.91 421.90 474.83 422.30 475.07 422.60 475.54 423.66 475.67 426.03 475.71 426.33 475.03 426.73 475.03 427.03 475.71 427.45 475.71 427.75 474.93 428.15 474.92 428.45 475.71 430.57 475.71 430.86 475.68 431.16 475.05 431.45 474.79 431.56 474.80 431.86 475.43 432.15 475.71 432.50 475.71 432.80 475.01 433.20 475.01 433.50 475.71 434.05 475.71 434.35 475.47 434.53 475.47 434.83 474.80 435.23 474.98 435.53 475.71 435.65 475.71 436.27 474.36 436.70 474.57 437.40 475.71 439.15 475.71 439.47 475.15 439.85 475.15 440.15 475.71 446.76 475.71 447.06 474.98 447.46 474.98 447.76 475.58 448.01 474.99 448.41 474.87 448.71 475.44 448.97 475.44 449.27 475.71 450.33 475.71 450.63 475.22 451.03 475.22 451.33 475.71 452.99 475.71 453.29 475.07 453.58 475.07 453.69 475.07 453.99 475.71 454.84 475.71 455.14 474.94 455.54 474.94 455.84 475.71 463.80 475.71 464.44 474.93 465.14 475.54 465.53 475.54 465.83 475.71 468.88 475.65 469.21 475.48 469.91 475.55 470.58 475.43 472.11 474.84 473.47 473.79 475.51 471.34 476.70 469.41 477.21 467.96 477.72 465.17 478.30 457.74 478.91 465.64 479.25 467.75 479.76 469.61 480.61 471.35 481.80 472.98 482.99 474.20 484.35 475.07 485.88 475.52 488.26 475.69 488.59 475.70 488.89 475.18 489.29 475.18 489.59 475.71 489.79 475.71 490.09 475.38 490.49 475.38 490.79 475.71 492.20 475.71 492.50 475.03 492.90 475.03 493.20 475.71 493.70 475.71 494.00 475.50 494.40 475.50 494.70 475.71 499.56 475.71 499.87 475.07 500.16 475.07 500.26 475.07 500.56 475.71 504.42 475.71 504.72 475.08 505.12 475.03 505.42 475.29 505.79 475.29 506.09 475.71 510.48 475.71 510.78 475.45 511.18 475.45 511.48 475.71 517.20 475.71 517.50 457.71 517.90 457.71 518.20 475.71 519.84 475.71 520.14 475.09 520.54 475.09 520.84 475.71 522.00 475.71 522.30 470.21 522.70 470.21 523.00 475.71 524.80 475.71 525.10 471.71 525.50 471.71 525.80 475.71 527.36 475.71 527.65 475.05 527.99 474.86 528.36 475.51 528.69 475.71 530.37 475.71 530.76 475.19 531.07 475.19 531.37 475.71 533.94 475.71 534.24 475.30 534.64 475.30 534.94 475.71 537.04 475.65 537.34 475.41 537.58 475.41 537.74 475.17 538.04 475.19 538.26 474.99 538.58 475.44 538.96 475.71 546.57 475.71 546.87 475.44 547.27 475.44 547.57 475.71 549.23 475.71 549.53 475.60 551.24 475.71 551.94 475.46 552.76 475.71 557.43 475.71 557.73 475.28 558.13 475.28 558.43 475.71 560.95 475.71 561.25 475.24 561.64 475.24 561.95 475.71 562.30 475.71 563.00 475.01 563.71 475.71 564.72 475.71 565.01 475.04 565.27 475.04 565.41 475.04 565.72 475.48 565.84 475.32 566.24 475.32 566.54 475.68 566.80 475.44 567.20 475.44 567.50 475.71 568.62 475.71 568.92 475.50 569.32 475.50 569.62 475.71 571.76 475.71 572.06 474.96 572.46 474.96 572.76 475.70 574.38 475.71 574.68 475.00 575.09 474.97 575.38 475.61 579.00 474.71 580.10 474.22 580.57 473.74 580.80 473.64 581.10 473.78 581.54 473.58 581.84 472.94 582.24 472.74 582.54 473.12 583.50 472.69 584.19 471.81 584.89 470.60 585.42 470.13 586.12 469.05 586.42 468.94 589.70 464.71 590.50 466.71 592.00 464.71 593.00 461.71 593.60 445.71 594.60 475.66 594.68 475.71 597.58 475.71 597.91 475.62 598.59 475.71 680.53 475.71" stroke="#9467bd"/>
<path d="M157.10 481.75 325.50 481.75 325.80 477.75 326.20 477.75 326.50 481.75 332.50 481.75 332.80 479.75 333.20 479.75 333.50 481.75 342.50 481.75 342.80 478.75 343.20 478.75 343.50 481.75 401.69 481.75 401.99 481.57 402.39 481.57 402.69 481.75 405.46 481.75 405.81 481.44 406.16 481.44 406.46 481.75 406.66 481.75 407.03 481.03 407.43 480.86 407.73 481.44 408.45 481.75 409.00 481.75 409.30 478.75 409.70 478.75 410.00 481.75 410.57 481.58 410.90 481.58 411.20 481.75 412.96 481.75 413.26 481.51 413.66 481.51 413.96 481.75 416.98 481.75 417.37 481.66 421.85 481.75 422.14 481.20 422.55 481.20 422.85 481.75 423.13 481.75 423.50 481.42 423.80 478.42 424.20 478.75 424.50 481.75 427.35 481.75 427.65 481.22 428.05 481.22 428.35 481.75 431.50 481.75 431.80 476.75 432.11 476.75 432.20 476.59 432.50 480.94 432.81 480.90 433.23 481.75 453.15 481.75 453.45 480.87 453.85 480.88 454.15 481.75 456.50 481.75 456.80 478.75 457.20 478.75 457.50 481.75 457.68 481.75 457.98 481.49 458.38 481.49 458.68 481.75 460.76 481.75 461.06 481.54 461.46 481.54 461.76 481.71 461.98 481.57 462.38 481.57 462.68 481.75 464.30 481.75 464.60 475.75 465.00 475.75 465.30 481.75 465.58 481.75 465.88 481.11 465.99 481.11 466.28 481.11 466.58 481.75 469.38 481.75 469.68 480.98 470.08 480.98 470.26 481.27 470.38 481.27 470.49 481.00 470.89 480.99 471.26 481.75 475.49 481.75 475.85 481.24 476.19 481.24 476.49 481.75 479.67 481.75 479.97 481.27 480.27 481.27 480.67 481.75 486.07 481.75 486.39 481.04 486.77 481.04 487.07 481.75 488.07 481.75 488.60 481.60 488.89 481.23 489.30 481.32 489.60 481.75 490.54 481.75 490.84 480.96 490.98 480.96 491.24 480.96 491.54 481.75 492.60 481.66 493.30 481.75 501.05 481.75 501.35 480.98 501.75 480.37 502.41 481.75 504.30 481.75 504.60 481.46 505.00 481.46 505.30 481.75 507.73 481.75 508.03 481.26 508.43 481.26 508.73 481.75 513.39 481.75 513.69 481.09 513.93 481.09 514.09 481.09 514.39 481.75 515.21 481.75 515.51 481.32 515.91 481.32 516.21 481.75 531.90 481.75 532.20 440.75 532.60 440.75 532.90 481.75 534.25 481.63 534.50 481.41 534.80 471.36 534.95 471.30 535.20 471.56 535.50 481.03 535.93 481.08 536.24 481.75 537.50 481.75 537.80 474.75 537.90 474.75 538.20 474.75 538.50 481.75 540.50 481.75 540.80 476.75 540.96 476.75 541.20 476.75 541.50 481.75 542.10 481.75 542.49 481.14 542.80 481.14 543.10 481.75 549.50 481.75 549.80 477.75 549.97 477.75 550.20 477.75 550.50 481.73 550.80 480.89 551.16 480.89 551.50 481.75 553.94 481.75 554.24 481.62 555.06 481.75 555.41 481.02 555.76 481.02 556.06 481.75 561.25 481.75 561.55 481.48 561.87 481.48 562.25 481.75 566.85 481.75 567.15 481.62 567.85 481.75 573.50 481.75 573.80 469.75 573.94 469.75 574.20 469.75 574.50 481.75 575.60 481.75 575.90 481.28 576.12 481.28 576.30 481.03 576.60 481.31 576.83 481.31 577.12 481.75 577.50 481.75 577.85 476.75 578.20 476.75 578.50 481.75 680.53 481.75" stroke="#8c564b"/>
<path d="M157.10 487.79 327.50 487.79 327.80 484.79 328.20 484.79 328.50 487.79 337.50 487.79 337.80 484.79 338.20 484.79 338.50 487.79 396.80 487.79 397.10 478.79 397.50 478.79 397.80 487.79 399.59 487.79 399.89 487.41 400.03 487.41 400.29 487.41 400.59 487.79 401.22 487.79 401.52 487.58 401.90 487.58 402.22 487.79 404.08 487.79 404.38 487.46 404.78 487.46 405.08 487.79 406.50 487.79 406.80 485.79 407.20 485.79 407.50 487.79 408.35 487.79 408.65 487.53 409.05 487.53 409.35 487.79 410.93 487.79 411.58 486.87 412.29 487.79 412.45 487.79 412.75 487.07 413.15 487.07 413.45 487.79 416.57 487.79 416.87 487.21 417.27 487.21 417.57 487.79 422.29 487.79 422.59 487.25 422.99 487.26 423.29 487.79 429.17 487.79 429.47 487.42 429.61 487.42 429.87 487.42 430.17 487.79 436.21 487.79 436.91 487.65 437.21 487.79 438.29 487.79 438.96 487.66 439.29 487.79 439.87 487.79 440.17 487.64 440.57 487.64 440.87 487.79 448.39 487.79 448.69 487.20 448.82 487.20 449.09 487.20 449.39 487.79 450.26 487.79 450.56 487.57 450.86 487.57 451.26 487.79 451.88 487.79 452.48 487.02 452.60 487.02 453.18 487.79 453.39 487.79 453.69 487.20 454.09 487.20 454.39 487.79 457.30 487.79 457.60 487.45 458.00 487.45 458.30 487.79 680.53 487.79" stroke="#e377c2"/>
<path d="M157.10 493.83 398.33 493.82 411.25 493.62 428.59 492.64 433.69 492.71 440.40 493.13 440.70 480.15 441.10 480.18 441.40 493.20 443.50 493.35 443.80 487.37 444.20 487.39 444.50 493.41 445.93 493.49 453.07 493.75 462.93 493.82 639.90 493.83 640.07 493.53 654.55 493.34 654.86 492.70 655.25 492.69 655.55 493.32 656.50 493.31 656.80 492.67 657.20 492.67 657.50 493.29 660.90 493.23 661.21 492.46 661.60 492.45 661.91 493.20 663.91 493.16 664.21 492.54 664.61 492.53 664.91 493.14 672.49 492.94 672.79 492.53 673.19 492.52 673.49 492.91 675.43 492.85 675.90 492.83 676.20 476.83 676.60 476.83 676.90 493.83 680.53 493.83" stroke="#7f7f7f"/>
<path d="M157.10 499.87 650.53 499.87 650.95 499.48 651.24 499.48 651.53 499.87 652.19 499.87 652.49 499.62 652.82 499.62 653.19 499.87 655.88 499.87 656.28 499.40 656.68 499.40 656.98 499.87 657.30 499.87 657.64 498.91 658.00 498.91 658.34 499.87 659.82 499.87 660.13 499.22 660.52 499.22 660.82 499.87 664.28 499.87 664.58 499.00 664.72 499.00 664.98 499.00 665.28 499.87 668.69 499.87 668.99 499.24 669.39 499.19 669.45 499.31 669.85 498.80 670.15 498.80 670.55 499.87 671.12 499.87 671.42 499.64 671.82 499.64 672.12 499.87 672.36 499.87 672.71 499.14 673.06 499.14 673.36 499.87 676.12 499.79 676.42 499.29 676.79 499.17 677.12 499.75 677.33 499.87 677.81 499.60 678.05 499.60 678.35 499.87 679.50 499.87 679.85 496.87 680.20 496.87 680.53 499.87" stroke="#bcbd22"/>
<path d="M157.10 505.91 650.95 505.91 651.05 505.91 651.35 505.21 651.75 505.21 652.05 505.91 652.29 505.91 652.65 505.16 652.99 505.16 653.29 505.91 653.50 505.91 653.65 505.91 653.95 505.05 654.35 505.05 654.65 505.91 656.22 505.91 656.61 505.03 656.80 505.03 657.01 504.77 657.31 505.53 657.50 505.53 657.80 505.91 659.86 505.91 660.16 504.97 660.39 504.97 660.56 504.82 660.86 505.64 661.10 505.64 661.39 505.91 662.22 505.91 662.52 505.43 662.85 505.43 663.22 505.91 663.40 505.91 663.70 504.95 664.10 504.94 664.40 505.91 671.01 505.91 671.17 505.91 671.86 504.34 672.54 505.91 674.50 505.91 674.80 501.91 674.92 501.91 675.20 501.91 675.50 505.91 678.95 505.91 679.25 504.87 679.34 504.87 679.64 504.87 679.95 505.91 680.53 505.91" stroke="#17becf"/>
<path d="M157.10 511.95 656.73 511.95 657.08 511.57 657.48 511.57 657.78 511.95 658.30 511.95 659.00 510.51 659.64 511.95 663.38 511.95 663.68 511.49 664.08 511.49 664.38 511.95 666.70 511.95 667.00 511.27 667.10 511.27 667.40 511.27 667.70 511.95 668.04 511.82 668.39 511.01 668.74 511.13 669.04 511.94 671.31 511.95 671.61 511.68 672.01 511.68 672.31 511.95 673.66 511.95 673.97 511.62 674.37 511.62 674.66 511.95 680.53 511.95" stroke="#1f77b4"/>
</g>
<rect x="131.4" y="127.4" width="576.3" height="402.8" fill="none" stroke="#000" stroke-width="1.3"/>
<line x1="125.8" y1="519.50" x2="131.4" y2="519.50" stroke="#000" stroke-width="1.3"/>
<text x="120.60" y="525.70" text-anchor="end" textLength="8.3" lengthAdjust="spacingAndGlyphs">0</text>
<line x1="125.8" y1="459.10" x2="131.4" y2="459.10" stroke="#000" stroke-width="1.3"/>
<text x="120.60" y="465.30" text-anchor="end" textLength="25.0" lengthAdjust="spacingAndGlyphs">100</text>
<line x1="125.8" y1="398.70" x2="131.4" y2="398.70" stroke="#000" stroke-width="1.3"/>
<text x="120.60" y="404.90" text-anchor="end" textLength="25.0" lengthAdjust="spacingAndGlyphs">200</text>
<line x1="125.8" y1="338.30" x2="131.4" y2="338.30" stroke="#000" stroke-width="1.3"/>
<text x="120.60" y="344.50" text-anchor="end" textLength="25.0" lengthAdjust="spacingAndGlyphs">300</text>
<line x1="125.8" y1="277.90" x2="131.4" y2="277.90" stroke="#000" stroke-width="1.3"/>
<text x="120.60" y="284.10" text-anchor="end" textLength="25.0" lengthAdjust="spacingAndGlyphs">400</text>
<line x1="125.8" y1="217.50" x2="131.4" y2="217.50" stroke="#000" stroke-width="1.3"/>
<text x="120.60" y="223.70" text-anchor="end" textLength="25.0" lengthAdjust="spacingAndGlyphs">500</text>
<line x1="125.8" y1="157.10" x2="131.4" y2="157.10" stroke="#000" stroke-width="1.3"/>
<text x="120.60" y="163.30" text-anchor="end" textLength="25.0" lengthAdjust="spacingAndGlyphs">600</text>
<line x1="157.10" y1="530.2" x2="157.10" y2="535.8" stroke="#000" stroke-width="1.3"/>
<text x="157.50" y="551.20" text-anchor="middle" textLength="8.3" lengthAdjust="spacingAndGlyphs">0</text>
<line x1="231.31" y1="530.2" x2="231.31" y2="535.8" stroke="#000" stroke-width="1.3"/>
<text x="231.71" y="551.20" text-anchor="middle" textLength="25.0" lengthAdjust="spacingAndGlyphs">500</text>
<line x1="305.52" y1="530.2" x2="305.52" y2="535.8" stroke="#000" stroke-width="1.3"/>
<text x="305.92" y="551.20" text-anchor="middle" textLength="33.4" lengthAdjust="spacingAndGlyphs">1000</text>
<line x1="379.73" y1="530.2" x2="379.73" y2="535.8" stroke="#000" stroke-width="1.3"/>
<text x="380.13" y="551.20" text-anchor="middle" textLength="33.4" lengthAdjust="spacingAndGlyphs">1500</text>
<line x1="453.94" y1="530.2" x2="453.94" y2="535.8" stroke="#000" stroke-width="1.3"/>
<text x="454.34" y="551.20" text-anchor="middle" textLength="33.4" lengthAdjust="spacingAndGlyphs">2000</text>
<line x1="528.15" y1="530.2" x2="528.15" y2="535.8" stroke="#000" stroke-width="1.3"/>
<text x="528.55" y="551.20" text-anchor="middle" textLength="33.4" lengthAdjust="spacingAndGlyphs">2500</text>
<line x1="602.36" y1="530.2" x2="602.36" y2="535.8" stroke="#000" stroke-width="1.3"/>
<text x="602.76" y="551.20" text-anchor="middle" textLength="33.4" lengthAdjust="spacingAndGlyphs">3000</text>
<line x1="676.57" y1="530.2" x2="676.57" y2="535.8" stroke="#000" stroke-width="1.3"/>
<text x="676.97" y="551.20" text-anchor="middle" textLength="33.4" lengthAdjust="spacingAndGlyphs">3500</text>
<text x="418.4" y="119" text-anchor="middle" style="font-size:19px" textLength="307.5" lengthAdjust="spacingAndGlyphs">night-light approximatition in fake 3d</text>
</svg>
</body></html>
